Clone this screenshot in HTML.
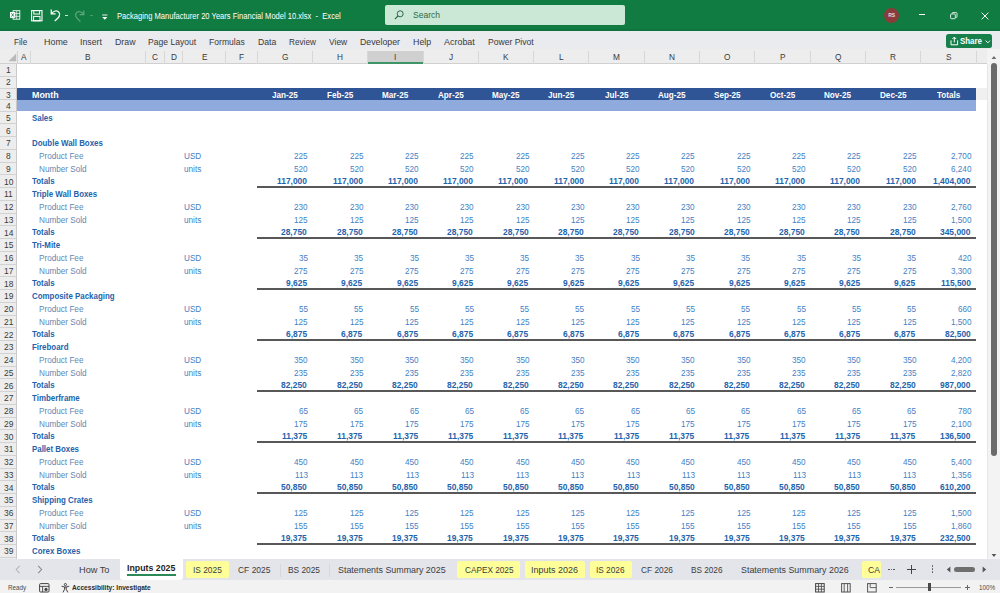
<!DOCTYPE html>
<html><head><meta charset="utf-8"><title>Packaging Manufacturer 20 Years Financial Model 10.xlsx - Excel</title>
<style>
html,body{margin:0;padding:0;}
body{width:1000px;height:593px;position:relative;overflow:hidden;background:#fff;font-family:"Liberation Sans",sans-serif;}
.t{position:absolute;white-space:pre;transform-origin:0 50%;display:block;}
.r{position:absolute;}
svg{position:absolute;overflow:visible;}
</style></head><body>
<div class="r" style="left:0.00px;top:0.00px;width:1000.00px;height:30.80px;background:#117c42;"></div>
<div class="r" style="left:0.00px;top:28.60px;width:1000.00px;height:2.20px;background:#0f7340;"></div>
<div class="r" style="left:385.20px;top:5.20px;width:240.30px;height:20.10px;background:#cbe8d7;border-radius:2px;"></div>
<span class="t " style="left:412.50px;top:8.90px;font-size:8.6px;line-height:12.6px;color:#2b6a47;transform:scaleX(0.9909);">Search</span>
<svg style="left:393px;top:9px" width="12" height="12" viewBox="0 0 12 12"><circle cx="7.2" cy="4.8" r="3" fill="none" stroke="#2b6a47" stroke-width="1"/><path d="M5 7 L1.8 10.2" stroke="#2b6a47" stroke-width="1.1" fill="none"/></svg>
<span class="t " style="left:117.00px;top:9.95px;font-size:8.5px;line-height:12.5px;color:#ffffff;transform:scaleX(0.8904);">Packaging Manufacturer 20 Years Financial Model 10.xlsx  -  Excel</span>
<svg style="left:10.4px;top:10.2px" width="10.6" height="10.6" viewBox="0 0 12 12"><rect x="3.5" y="0.8" width="7.6" height="9.6" fill="none" stroke="#fff" stroke-width="1"/><path d="M3.5 4h7.6M3.5 7.2h7.6M7.6 0.8v9.6" stroke="#fff" stroke-width="0.8"/><rect x="0" y="2.3" width="6" height="6.6" fill="#fff"/><path d="M1.6 3.8l2.8 3.6M4.4 3.8L1.6 7.4" stroke="#117c42" stroke-width="1"/></svg>
<svg style="left:31px;top:10px" width="12" height="12" viewBox="0 0 12 12"><rect x="0.6" y="0.6" width="10.4" height="10.2" fill="none" stroke="#fff" stroke-width="1.1"/><rect x="2.8" y="0.6" width="5.8" height="3.4" fill="none" stroke="#fff" stroke-width="1"/><rect x="2.6" y="6.4" width="6.4" height="4.4" fill="none" stroke="#fff" stroke-width="1"/></svg>
<svg style="left:49.6px;top:8.2px" width="12.4" height="14.8" viewBox="0 0 12 14"><path d="M1.2 1.4v4.2h4.2" fill="none" stroke="#fff" stroke-width="1.2"/><path d="M1.6 5.2C3.4 2.4 7 1.8 8.8 4.2c1.6 2.4 0 5-4.2 8.2" fill="none" stroke="#fff" stroke-width="1.2"/></svg>
<div class="r" style="left:64.50px;top:15.20px;width:3.00px;height:1.00px;background:#cfe3d6;"></div>
<svg style="left:73px;top:9px;opacity:.33" width="12" height="14" viewBox="0 0 12 14"><path d="M10.8 1.4v4.2h-4.2" fill="none" stroke="#fff" stroke-width="1.2"/><path d="M10.4 5.2C8.6 2.4 5 1.8 3.2 4.2c-1.6 2.4 0 5 4.2 8.2" fill="none" stroke="#fff" stroke-width="1.2"/></svg>
<div class="r" style="left:90.00px;top:15.20px;width:3.00px;height:1.00px;background:#4b9a6c;"></div>
<svg style="left:101px;top:13.5px" width="8" height="7" viewBox="0 0 8 7"><path d="M1.2 1h5.2" stroke="#fff" stroke-width="0.9"/><path d="M1.2 3h5.2L3.8 5.8z" fill="#fff"/></svg>
<div class="r" style="left:884.00px;top:7.80px;width:15.40px;height:15.40px;background:#8a3b3a;border-radius:50%;"></div>
<span class="t " style="left:888.23px;top:11.10px;font-size:5px;line-height:9px;color:#f3d9d9;transform:scaleX(1.0000);font-weight:bold;">RS</span>
<div class="r" style="left:919.00px;top:14.40px;width:5.60px;height:1.00px;background:#fff;"></div>
<svg style="left:949.8px;top:11.6px" width="7.6" height="7.6" viewBox="0 0 10 10"><rect x="0.8" y="2.6" width="6.2" height="6.2" rx="1" fill="none" stroke="#fff" stroke-width="1.1"/><path d="M2.8 2.4V1.6c0-.5.3-.8.8-.8h4.6c.6 0 1 .4 1 1v4.6c0 .5-.3.8-.8.8H7.4" fill="none" stroke="#fff" stroke-width="1.1"/></svg>
<svg style="left:980.6px;top:11.6px" width="8" height="8" viewBox="0 0 10 10"><path d="M0.8 0.8l8.4 8.4M9.2 0.8L0.8 9.2" stroke="#fff" stroke-width="1.2"/></svg>
<div class="r" style="left:0.00px;top:30.80px;width:1000.00px;height:17.90px;background:#e9ebef;"></div>
<span class="t " style="left:14.00px;top:35.80px;font-size:9px;line-height:13px;color:#3a3a3a;transform:scaleX(0.9103);">File</span>
<span class="t " style="left:44.00px;top:35.80px;font-size:9px;line-height:13px;color:#3a3a3a;transform:scaleX(0.9914);">Home</span>
<span class="t " style="left:80.40px;top:35.80px;font-size:9px;line-height:13px;color:#3a3a3a;transform:scaleX(0.9686);">Insert</span>
<span class="t " style="left:114.80px;top:35.80px;font-size:9px;line-height:13px;color:#3a3a3a;transform:scaleX(0.9761);">Draw</span>
<span class="t " style="left:147.90px;top:35.80px;font-size:9px;line-height:13px;color:#3a3a3a;transform:scaleX(0.9518);">Page Layout</span>
<span class="t " style="left:209.20px;top:35.80px;font-size:9px;line-height:13px;color:#3a3a3a;transform:scaleX(0.9545);">Formulas</span>
<span class="t " style="left:257.60px;top:35.80px;font-size:9px;line-height:13px;color:#3a3a3a;transform:scaleX(0.9627);">Data</span>
<span class="t " style="left:288.80px;top:35.80px;font-size:9px;line-height:13px;color:#3a3a3a;transform:scaleX(0.9116);">Review</span>
<span class="t " style="left:329.40px;top:35.80px;font-size:9px;line-height:13px;color:#3a3a3a;transform:scaleX(0.9408);">View</span>
<span class="t " style="left:360.20px;top:35.80px;font-size:9px;line-height:13px;color:#3a3a3a;transform:scaleX(0.9751);">Developer</span>
<span class="t " style="left:412.80px;top:35.80px;font-size:9px;line-height:13px;color:#3a3a3a;transform:scaleX(0.9833);">Help</span>
<span class="t " style="left:443.70px;top:35.80px;font-size:9px;line-height:13px;color:#3a3a3a;transform:scaleX(0.9931);">Acrobat</span>
<span class="t " style="left:487.60px;top:35.80px;font-size:9px;line-height:13px;color:#3a3a3a;transform:scaleX(0.9517);">Power Pivot</span>
<div class="r" style="left:946.30px;top:33.50px;width:46.20px;height:14.90px;background:#17804a;border-radius:2.5px;"></div>
<span class="t " style="left:960.00px;top:35.00px;font-size:8.6px;line-height:12.6px;color:#fff;transform:scaleX(0.9205);font-weight:bold;">Share</span>
<svg style="left:950px;top:36px" width="9" height="10" viewBox="0 0 9 10"><path d="M1 4.4v4.4h6.6V4.4" fill="none" stroke="#fff" stroke-width="1"/><path d="M4.3 6.4V1.2M2.4 3l1.9-1.9L6.2 3" fill="none" stroke="#fff" stroke-width="1"/></svg>
<svg style="left:984.5px;top:39.5px" width="6" height="4" viewBox="0 0 6 4"><path d="M0.6 0.6l2.2 2.2L5 0.6" fill="none" stroke="#fff" stroke-width="1"/></svg>
<div class="r" style="left:0.00px;top:48.70px;width:1000.00px;height:15.10px;background:#ededed;"></div>
<div class="r" style="left:0.00px;top:63.20px;width:987.00px;height:0.60px;background:#d0d0d0;"></div>
<div class="r" style="left:367.60px;top:50.60px;width:55.30px;height:13.20px;background:#d0d0d0;"></div>
<div class="r" style="left:367.60px;top:62.40px;width:55.30px;height:1.20px;background:#3f9468;"></div>
<svg style="left:8px;top:53px" width="9" height="9" viewBox="0 0 9 9"><path d="M8.2 0.6V8.2H0.6z" fill="#b9b9b9"/></svg>
<span class="t " style="left:21.29px;top:50.90px;font-size:9px;line-height:13px;color:#3a3a3a;transform:scaleX(0.9200);">A</span>
<div class="r" style="left:29.60px;top:51.00px;width:0.80px;height:12.50px;background:#d8d8d8;"></div>
<span class="t " style="left:85.04px;top:50.90px;font-size:9px;line-height:13px;color:#3a3a3a;transform:scaleX(0.9200);">B</span>
<div class="r" style="left:144.60px;top:51.00px;width:0.80px;height:12.50px;background:#d8d8d8;"></div>
<span class="t " style="left:151.81px;top:50.90px;font-size:9px;line-height:13px;color:#3a3a3a;transform:scaleX(0.9200);">C</span>
<div class="r" style="left:163.60px;top:51.00px;width:0.80px;height:12.50px;background:#d8d8d8;"></div>
<span class="t " style="left:170.51px;top:50.90px;font-size:9px;line-height:13px;color:#3a3a3a;transform:scaleX(0.9200);">D</span>
<div class="r" style="left:182.00px;top:51.00px;width:0.80px;height:12.50px;background:#d8d8d8;"></div>
<span class="t " style="left:201.54px;top:50.90px;font-size:9px;line-height:13px;color:#3a3a3a;transform:scaleX(0.9200);">E</span>
<div class="r" style="left:225.20px;top:51.00px;width:0.80px;height:12.50px;background:#d8d8d8;"></div>
<span class="t " style="left:239.07px;top:50.90px;font-size:9px;line-height:13px;color:#3a3a3a;transform:scaleX(0.9200);">F</span>
<div class="r" style="left:256.60px;top:51.00px;width:0.80px;height:12.50px;background:#d8d8d8;"></div>
<span class="t " style="left:281.73px;top:50.90px;font-size:9px;line-height:13px;color:#3a3a3a;transform:scaleX(0.9200);">G</span>
<div class="r" style="left:311.90px;top:51.00px;width:0.80px;height:12.50px;background:#d8d8d8;"></div>
<span class="t " style="left:337.26px;top:50.90px;font-size:9px;line-height:13px;color:#3a3a3a;transform:scaleX(0.9200);">H</span>
<div class="r" style="left:367.20px;top:51.00px;width:0.80px;height:12.50px;background:#d8d8d8;"></div>
<span class="t " style="left:394.40px;top:50.90px;font-size:9px;line-height:13px;color:#3a3a3a;transform:scaleX(0.9200);">I</span>
<div class="r" style="left:422.50px;top:51.00px;width:0.80px;height:12.50px;background:#d8d8d8;"></div>
<span class="t " style="left:448.78px;top:50.90px;font-size:9px;line-height:13px;color:#3a3a3a;transform:scaleX(0.9200);">J</span>
<div class="r" style="left:477.80px;top:51.00px;width:0.80px;height:12.50px;background:#d8d8d8;"></div>
<span class="t " style="left:503.39px;top:50.90px;font-size:9px;line-height:13px;color:#3a3a3a;transform:scaleX(0.9200);">K</span>
<div class="r" style="left:533.10px;top:51.00px;width:0.80px;height:12.50px;background:#d8d8d8;"></div>
<span class="t " style="left:559.15px;top:50.90px;font-size:9px;line-height:13px;color:#3a3a3a;transform:scaleX(0.9200);">L</span>
<div class="r" style="left:588.40px;top:51.00px;width:0.80px;height:12.50px;background:#d8d8d8;"></div>
<span class="t " style="left:613.30px;top:50.90px;font-size:9px;line-height:13px;color:#3a3a3a;transform:scaleX(0.9200);">M</span>
<div class="r" style="left:643.70px;top:51.00px;width:0.80px;height:12.50px;background:#d8d8d8;"></div>
<span class="t " style="left:669.06px;top:50.90px;font-size:9px;line-height:13px;color:#3a3a3a;transform:scaleX(0.9200);">N</span>
<div class="r" style="left:699.00px;top:51.00px;width:0.80px;height:12.50px;background:#d8d8d8;"></div>
<span class="t " style="left:724.13px;top:50.90px;font-size:9px;line-height:13px;color:#3a3a3a;transform:scaleX(0.9200);">O</span>
<div class="r" style="left:754.30px;top:51.00px;width:0.80px;height:12.50px;background:#d8d8d8;"></div>
<span class="t " style="left:779.89px;top:50.90px;font-size:9px;line-height:13px;color:#3a3a3a;transform:scaleX(0.9200);">P</span>
<div class="r" style="left:809.60px;top:51.00px;width:0.80px;height:12.50px;background:#d8d8d8;"></div>
<span class="t " style="left:834.73px;top:50.90px;font-size:9px;line-height:13px;color:#3a3a3a;transform:scaleX(0.9200);">Q</span>
<div class="r" style="left:864.90px;top:51.00px;width:0.80px;height:12.50px;background:#d8d8d8;"></div>
<span class="t " style="left:890.26px;top:50.90px;font-size:9px;line-height:13px;color:#3a3a3a;transform:scaleX(0.9200);">R</span>
<div class="r" style="left:920.20px;top:51.00px;width:0.80px;height:12.50px;background:#d8d8d8;"></div>
<span class="t " style="left:945.79px;top:50.90px;font-size:9px;line-height:13px;color:#3a3a3a;transform:scaleX(0.9200);">S</span>
<div class="r" style="left:975.50px;top:51.00px;width:0.80px;height:12.50px;background:#d8d8d8;"></div>
<div class="r" style="left:17.00px;top:51.00px;width:0.80px;height:12.50px;background:#d4d4d4;"></div>
<div class="r" style="left:0.00px;top:63.90px;width:16.40px;height:495.30px;background:#ededed;"></div>
<div class="r" style="left:16.40px;top:63.90px;width:0.90px;height:495.30px;background:#c9c9c9;"></div>
<div class="r" style="left:0.00px;top:75.60px;width:16.60px;height:0.80px;background:#d2d2d2;"></div>
<span class="t " style="left:6.35px;top:63.00px;font-size:9.4px;line-height:13.4px;color:#3a3a3a;transform:scaleX(0.9000);">1</span>
<div class="r" style="left:0.00px;top:87.60px;width:16.60px;height:0.80px;background:#d2d2d2;"></div>
<span class="t " style="left:6.35px;top:75.40px;font-size:9.4px;line-height:13.4px;color:#3a3a3a;transform:scaleX(0.9000);">2</span>
<div class="r" style="left:0.00px;top:99.40px;width:16.60px;height:0.80px;background:#d2d2d2;"></div>
<span class="t " style="left:6.35px;top:88.10px;font-size:9.4px;line-height:13.4px;color:#3a3a3a;transform:scaleX(0.9000);">3</span>
<div class="r" style="left:0.00px;top:110.60px;width:16.60px;height:0.80px;background:#d2d2d2;"></div>
<span class="t " style="left:6.35px;top:98.70px;font-size:9.4px;line-height:13.4px;color:#3a3a3a;transform:scaleX(0.9000);">4</span>
<div class="r" style="left:0.00px;top:123.35px;width:16.60px;height:0.80px;background:#d2d2d2;"></div>
<span class="t " style="left:6.35px;top:110.88px;font-size:9.4px;line-height:13.4px;color:#3a3a3a;transform:scaleX(0.9000);">5</span>
<div class="r" style="left:0.00px;top:136.10px;width:16.60px;height:0.80px;background:#d2d2d2;"></div>
<span class="t " style="left:6.35px;top:123.62px;font-size:9.4px;line-height:13.4px;color:#3a3a3a;transform:scaleX(0.9000);">6</span>
<div class="r" style="left:0.00px;top:148.85px;width:16.60px;height:0.80px;background:#d2d2d2;"></div>
<span class="t " style="left:6.35px;top:136.38px;font-size:9.4px;line-height:13.4px;color:#3a3a3a;transform:scaleX(0.9000);">7</span>
<div class="r" style="left:0.00px;top:161.60px;width:16.60px;height:0.80px;background:#d2d2d2;"></div>
<span class="t " style="left:6.35px;top:149.12px;font-size:9.4px;line-height:13.4px;color:#3a3a3a;transform:scaleX(0.9000);">8</span>
<div class="r" style="left:0.00px;top:174.35px;width:16.60px;height:0.80px;background:#d2d2d2;"></div>
<span class="t " style="left:6.35px;top:161.88px;font-size:9.4px;line-height:13.4px;color:#3a3a3a;transform:scaleX(0.9000);">9</span>
<div class="r" style="left:0.00px;top:187.10px;width:16.60px;height:0.80px;background:#d2d2d2;"></div>
<span class="t " style="left:4.00px;top:174.62px;font-size:9.4px;line-height:13.4px;color:#3a3a3a;transform:scaleX(0.9000);">10</span>
<div class="r" style="left:0.00px;top:199.85px;width:16.60px;height:0.80px;background:#d2d2d2;"></div>
<span class="t " style="left:4.31px;top:187.38px;font-size:9.4px;line-height:13.4px;color:#3a3a3a;transform:scaleX(0.9000);">11</span>
<div class="r" style="left:0.00px;top:212.60px;width:16.60px;height:0.80px;background:#d2d2d2;"></div>
<span class="t " style="left:4.00px;top:200.12px;font-size:9.4px;line-height:13.4px;color:#3a3a3a;transform:scaleX(0.9000);">12</span>
<div class="r" style="left:0.00px;top:225.35px;width:16.60px;height:0.80px;background:#d2d2d2;"></div>
<span class="t " style="left:4.00px;top:212.88px;font-size:9.4px;line-height:13.4px;color:#3a3a3a;transform:scaleX(0.9000);">13</span>
<div class="r" style="left:0.00px;top:238.10px;width:16.60px;height:0.80px;background:#d2d2d2;"></div>
<span class="t " style="left:4.00px;top:225.62px;font-size:9.4px;line-height:13.4px;color:#3a3a3a;transform:scaleX(0.9000);">14</span>
<div class="r" style="left:0.00px;top:250.85px;width:16.60px;height:0.80px;background:#d2d2d2;"></div>
<span class="t " style="left:4.00px;top:238.38px;font-size:9.4px;line-height:13.4px;color:#3a3a3a;transform:scaleX(0.9000);">15</span>
<div class="r" style="left:0.00px;top:263.60px;width:16.60px;height:0.80px;background:#d2d2d2;"></div>
<span class="t " style="left:4.00px;top:251.12px;font-size:9.4px;line-height:13.4px;color:#3a3a3a;transform:scaleX(0.9000);">16</span>
<div class="r" style="left:0.00px;top:276.35px;width:16.60px;height:0.80px;background:#d2d2d2;"></div>
<span class="t " style="left:4.00px;top:263.88px;font-size:9.4px;line-height:13.4px;color:#3a3a3a;transform:scaleX(0.9000);">17</span>
<div class="r" style="left:0.00px;top:289.10px;width:16.60px;height:0.80px;background:#d2d2d2;"></div>
<span class="t " style="left:4.00px;top:276.62px;font-size:9.4px;line-height:13.4px;color:#3a3a3a;transform:scaleX(0.9000);">18</span>
<div class="r" style="left:0.00px;top:301.85px;width:16.60px;height:0.80px;background:#d2d2d2;"></div>
<span class="t " style="left:4.00px;top:289.38px;font-size:9.4px;line-height:13.4px;color:#3a3a3a;transform:scaleX(0.9000);">19</span>
<div class="r" style="left:0.00px;top:314.60px;width:16.60px;height:0.80px;background:#d2d2d2;"></div>
<span class="t " style="left:4.00px;top:302.12px;font-size:9.4px;line-height:13.4px;color:#3a3a3a;transform:scaleX(0.9000);">20</span>
<div class="r" style="left:0.00px;top:327.35px;width:16.60px;height:0.80px;background:#d2d2d2;"></div>
<span class="t " style="left:4.00px;top:314.88px;font-size:9.4px;line-height:13.4px;color:#3a3a3a;transform:scaleX(0.9000);">21</span>
<div class="r" style="left:0.00px;top:340.10px;width:16.60px;height:0.80px;background:#d2d2d2;"></div>
<span class="t " style="left:4.00px;top:327.62px;font-size:9.4px;line-height:13.4px;color:#3a3a3a;transform:scaleX(0.9000);">22</span>
<div class="r" style="left:0.00px;top:352.85px;width:16.60px;height:0.80px;background:#d2d2d2;"></div>
<span class="t " style="left:4.00px;top:340.38px;font-size:9.4px;line-height:13.4px;color:#3a3a3a;transform:scaleX(0.9000);">23</span>
<div class="r" style="left:0.00px;top:365.60px;width:16.60px;height:0.80px;background:#d2d2d2;"></div>
<span class="t " style="left:4.00px;top:353.12px;font-size:9.4px;line-height:13.4px;color:#3a3a3a;transform:scaleX(0.9000);">24</span>
<div class="r" style="left:0.00px;top:378.35px;width:16.60px;height:0.80px;background:#d2d2d2;"></div>
<span class="t " style="left:4.00px;top:365.88px;font-size:9.4px;line-height:13.4px;color:#3a3a3a;transform:scaleX(0.9000);">25</span>
<div class="r" style="left:0.00px;top:391.10px;width:16.60px;height:0.80px;background:#d2d2d2;"></div>
<span class="t " style="left:4.00px;top:378.62px;font-size:9.4px;line-height:13.4px;color:#3a3a3a;transform:scaleX(0.9000);">26</span>
<div class="r" style="left:0.00px;top:403.85px;width:16.60px;height:0.80px;background:#d2d2d2;"></div>
<span class="t " style="left:4.00px;top:391.38px;font-size:9.4px;line-height:13.4px;color:#3a3a3a;transform:scaleX(0.9000);">27</span>
<div class="r" style="left:0.00px;top:416.60px;width:16.60px;height:0.80px;background:#d2d2d2;"></div>
<span class="t " style="left:4.00px;top:404.12px;font-size:9.4px;line-height:13.4px;color:#3a3a3a;transform:scaleX(0.9000);">28</span>
<div class="r" style="left:0.00px;top:429.35px;width:16.60px;height:0.80px;background:#d2d2d2;"></div>
<span class="t " style="left:4.00px;top:416.88px;font-size:9.4px;line-height:13.4px;color:#3a3a3a;transform:scaleX(0.9000);">29</span>
<div class="r" style="left:0.00px;top:442.10px;width:16.60px;height:0.80px;background:#d2d2d2;"></div>
<span class="t " style="left:4.00px;top:429.62px;font-size:9.4px;line-height:13.4px;color:#3a3a3a;transform:scaleX(0.9000);">30</span>
<div class="r" style="left:0.00px;top:454.85px;width:16.60px;height:0.80px;background:#d2d2d2;"></div>
<span class="t " style="left:4.00px;top:442.38px;font-size:9.4px;line-height:13.4px;color:#3a3a3a;transform:scaleX(0.9000);">31</span>
<div class="r" style="left:0.00px;top:467.60px;width:16.60px;height:0.80px;background:#d2d2d2;"></div>
<span class="t " style="left:4.00px;top:455.12px;font-size:9.4px;line-height:13.4px;color:#3a3a3a;transform:scaleX(0.9000);">32</span>
<div class="r" style="left:0.00px;top:480.35px;width:16.60px;height:0.80px;background:#d2d2d2;"></div>
<span class="t " style="left:4.00px;top:467.88px;font-size:9.4px;line-height:13.4px;color:#3a3a3a;transform:scaleX(0.9000);">33</span>
<div class="r" style="left:0.00px;top:493.10px;width:16.60px;height:0.80px;background:#d2d2d2;"></div>
<span class="t " style="left:4.00px;top:480.62px;font-size:9.4px;line-height:13.4px;color:#3a3a3a;transform:scaleX(0.9000);">34</span>
<div class="r" style="left:0.00px;top:505.85px;width:16.60px;height:0.80px;background:#d2d2d2;"></div>
<span class="t " style="left:4.00px;top:493.38px;font-size:9.4px;line-height:13.4px;color:#3a3a3a;transform:scaleX(0.9000);">35</span>
<div class="r" style="left:0.00px;top:518.60px;width:16.60px;height:0.80px;background:#d2d2d2;"></div>
<span class="t " style="left:4.00px;top:506.13px;font-size:9.4px;line-height:13.4px;color:#3a3a3a;transform:scaleX(0.9000);">36</span>
<div class="r" style="left:0.00px;top:531.35px;width:16.60px;height:0.80px;background:#d2d2d2;"></div>
<span class="t " style="left:4.00px;top:518.88px;font-size:9.4px;line-height:13.4px;color:#3a3a3a;transform:scaleX(0.9000);">37</span>
<div class="r" style="left:0.00px;top:544.10px;width:16.60px;height:0.80px;background:#d2d2d2;"></div>
<span class="t " style="left:4.00px;top:531.62px;font-size:9.4px;line-height:13.4px;color:#3a3a3a;transform:scaleX(0.9000);">38</span>
<div class="r" style="left:0.00px;top:556.85px;width:16.60px;height:0.80px;background:#d2d2d2;"></div>
<span class="t " style="left:4.00px;top:544.38px;font-size:9.4px;line-height:13.4px;color:#3a3a3a;transform:scaleX(0.9000);">39</span>
<div class="r" style="left:17.30px;top:87.80px;width:958.60px;height:12.00px;background:#2f5597;"></div>
<div class="r" style="left:17.30px;top:99.80px;width:958.60px;height:11.60px;background:#8faadc;"></div>
<div class="r" style="left:975.90px;top:88.00px;width:11.10px;height:11.80px;background:#f0f0f0;"></div>
<span class="t " style="left:32.00px;top:88.75px;font-size:8.5px;line-height:12.5px;color:#ffffff;transform:scaleX(1.0437);font-weight:bold;">Month</span>
<span class="t " style="left:271.99px;top:88.75px;font-size:8.5px;line-height:12.5px;color:#ffffff;transform:scaleX(0.9550);font-weight:bold;">Jan-25</span>
<span class="t " style="left:327.07px;top:88.75px;font-size:8.5px;line-height:12.5px;color:#ffffff;transform:scaleX(0.9550);font-weight:bold;">Feb-25</span>
<span class="t " style="left:382.37px;top:88.75px;font-size:8.5px;line-height:12.5px;color:#ffffff;transform:scaleX(0.9550);font-weight:bold;">Mar-25</span>
<span class="t " style="left:437.89px;top:88.75px;font-size:8.5px;line-height:12.5px;color:#ffffff;transform:scaleX(0.9550);font-weight:bold;">Apr-25</span>
<span class="t " style="left:492.29px;top:88.75px;font-size:8.5px;line-height:12.5px;color:#ffffff;transform:scaleX(0.9550);font-weight:bold;">May-25</span>
<span class="t " style="left:548.27px;top:88.75px;font-size:8.5px;line-height:12.5px;color:#ffffff;transform:scaleX(0.9550);font-weight:bold;">Jun-25</span>
<span class="t " style="left:604.92px;top:88.75px;font-size:8.5px;line-height:12.5px;color:#ffffff;transform:scaleX(0.9550);font-weight:bold;">Jul-25</span>
<span class="t " style="left:658.20px;top:88.75px;font-size:8.5px;line-height:12.5px;color:#ffffff;transform:scaleX(0.9550);font-weight:bold;">Aug-25</span>
<span class="t " style="left:713.94px;top:88.75px;font-size:8.5px;line-height:12.5px;color:#ffffff;transform:scaleX(0.9550);font-weight:bold;">Sep-25</span>
<span class="t " style="left:769.92px;top:88.75px;font-size:8.5px;line-height:12.5px;color:#ffffff;transform:scaleX(0.9550);font-weight:bold;">Oct-25</span>
<span class="t " style="left:824.32px;top:88.75px;font-size:8.5px;line-height:12.5px;color:#ffffff;transform:scaleX(0.9550);font-weight:bold;">Nov-25</span>
<span class="t " style="left:879.84px;top:88.75px;font-size:8.5px;line-height:12.5px;color:#ffffff;transform:scaleX(0.9550);font-weight:bold;">Dec-25</span>
<span class="t " style="left:936.80px;top:88.75px;font-size:8.5px;line-height:12.5px;color:#ffffff;transform:scaleX(0.9550);font-weight:bold;">Totals</span>
<span class="t " style="left:32.00px;top:111.72px;font-size:8.5px;line-height:12.5px;color:#1e63ac;transform:scaleX(0.9300);font-weight:bold;">Sales</span>
<span class="t " style="left:32.00px;top:137.22px;font-size:8.5px;line-height:12.5px;color:#1e63ac;transform:scaleX(0.9300);font-weight:bold;">Double Wall Boxes</span>
<span class="t " style="left:38.60px;top:149.97px;font-size:8.5px;line-height:12.5px;color:#6088b3;transform:scaleX(0.9600);">Product Fee</span>
<span class="t " style="left:183.80px;top:149.97px;font-size:8.5px;line-height:12.5px;color:#3f7fc0;transform:scaleX(0.9600);">USD</span>
<span class="t " style="left:38.60px;top:162.72px;font-size:8.5px;line-height:12.5px;color:#6088b3;transform:scaleX(0.9600);">Number Sold</span>
<span class="t " style="left:183.80px;top:162.72px;font-size:8.5px;line-height:12.5px;color:#3f7fc0;transform:scaleX(0.9600);">units</span>
<span class="t " style="left:32.00px;top:175.47px;font-size:8.5px;line-height:12.5px;color:#1e63ac;transform:scaleX(0.9300);font-weight:bold;">Totals</span>
<span class="t " style="left:294.39px;top:149.97px;font-size:8.5px;line-height:12.5px;color:#3f82c6;transform:scaleX(0.9600);">225</span>
<span class="t " style="left:294.39px;top:162.72px;font-size:8.5px;line-height:12.5px;color:#3f82c6;transform:scaleX(0.9600);">520</span>
<span class="t " style="left:277.25px;top:175.47px;font-size:8.5px;line-height:12.5px;color:#1e63ac;transform:scaleX(0.9900);font-weight:bold;">117,000</span>
<span class="t " style="left:349.69px;top:149.97px;font-size:8.5px;line-height:12.5px;color:#3f82c6;transform:scaleX(0.9600);">225</span>
<span class="t " style="left:349.69px;top:162.72px;font-size:8.5px;line-height:12.5px;color:#3f82c6;transform:scaleX(0.9600);">520</span>
<span class="t " style="left:332.55px;top:175.47px;font-size:8.5px;line-height:12.5px;color:#1e63ac;transform:scaleX(0.9900);font-weight:bold;">117,000</span>
<span class="t " style="left:404.99px;top:149.97px;font-size:8.5px;line-height:12.5px;color:#3f82c6;transform:scaleX(0.9600);">225</span>
<span class="t " style="left:404.99px;top:162.72px;font-size:8.5px;line-height:12.5px;color:#3f82c6;transform:scaleX(0.9600);">520</span>
<span class="t " style="left:387.85px;top:175.47px;font-size:8.5px;line-height:12.5px;color:#1e63ac;transform:scaleX(0.9900);font-weight:bold;">117,000</span>
<span class="t " style="left:460.29px;top:149.97px;font-size:8.5px;line-height:12.5px;color:#3f82c6;transform:scaleX(0.9600);">225</span>
<span class="t " style="left:460.29px;top:162.72px;font-size:8.5px;line-height:12.5px;color:#3f82c6;transform:scaleX(0.9600);">520</span>
<span class="t " style="left:443.15px;top:175.47px;font-size:8.5px;line-height:12.5px;color:#1e63ac;transform:scaleX(0.9900);font-weight:bold;">117,000</span>
<span class="t " style="left:515.59px;top:149.97px;font-size:8.5px;line-height:12.5px;color:#3f82c6;transform:scaleX(0.9600);">225</span>
<span class="t " style="left:515.59px;top:162.72px;font-size:8.5px;line-height:12.5px;color:#3f82c6;transform:scaleX(0.9600);">520</span>
<span class="t " style="left:498.45px;top:175.47px;font-size:8.5px;line-height:12.5px;color:#1e63ac;transform:scaleX(0.9900);font-weight:bold;">117,000</span>
<span class="t " style="left:570.89px;top:149.97px;font-size:8.5px;line-height:12.5px;color:#3f82c6;transform:scaleX(0.9600);">225</span>
<span class="t " style="left:570.89px;top:162.72px;font-size:8.5px;line-height:12.5px;color:#3f82c6;transform:scaleX(0.9600);">520</span>
<span class="t " style="left:553.75px;top:175.47px;font-size:8.5px;line-height:12.5px;color:#1e63ac;transform:scaleX(0.9900);font-weight:bold;">117,000</span>
<span class="t " style="left:626.19px;top:149.97px;font-size:8.5px;line-height:12.5px;color:#3f82c6;transform:scaleX(0.9600);">225</span>
<span class="t " style="left:626.19px;top:162.72px;font-size:8.5px;line-height:12.5px;color:#3f82c6;transform:scaleX(0.9600);">520</span>
<span class="t " style="left:609.05px;top:175.47px;font-size:8.5px;line-height:12.5px;color:#1e63ac;transform:scaleX(0.9900);font-weight:bold;">117,000</span>
<span class="t " style="left:681.49px;top:149.97px;font-size:8.5px;line-height:12.5px;color:#3f82c6;transform:scaleX(0.9600);">225</span>
<span class="t " style="left:681.49px;top:162.72px;font-size:8.5px;line-height:12.5px;color:#3f82c6;transform:scaleX(0.9600);">520</span>
<span class="t " style="left:664.35px;top:175.47px;font-size:8.5px;line-height:12.5px;color:#1e63ac;transform:scaleX(0.9900);font-weight:bold;">117,000</span>
<span class="t " style="left:736.79px;top:149.97px;font-size:8.5px;line-height:12.5px;color:#3f82c6;transform:scaleX(0.9600);">225</span>
<span class="t " style="left:736.79px;top:162.72px;font-size:8.5px;line-height:12.5px;color:#3f82c6;transform:scaleX(0.9600);">520</span>
<span class="t " style="left:719.65px;top:175.47px;font-size:8.5px;line-height:12.5px;color:#1e63ac;transform:scaleX(0.9900);font-weight:bold;">117,000</span>
<span class="t " style="left:792.09px;top:149.97px;font-size:8.5px;line-height:12.5px;color:#3f82c6;transform:scaleX(0.9600);">225</span>
<span class="t " style="left:792.09px;top:162.72px;font-size:8.5px;line-height:12.5px;color:#3f82c6;transform:scaleX(0.9600);">520</span>
<span class="t " style="left:774.95px;top:175.47px;font-size:8.5px;line-height:12.5px;color:#1e63ac;transform:scaleX(0.9900);font-weight:bold;">117,000</span>
<span class="t " style="left:847.39px;top:149.97px;font-size:8.5px;line-height:12.5px;color:#3f82c6;transform:scaleX(0.9600);">225</span>
<span class="t " style="left:847.39px;top:162.72px;font-size:8.5px;line-height:12.5px;color:#3f82c6;transform:scaleX(0.9600);">520</span>
<span class="t " style="left:830.25px;top:175.47px;font-size:8.5px;line-height:12.5px;color:#1e63ac;transform:scaleX(0.9900);font-weight:bold;">117,000</span>
<span class="t " style="left:902.69px;top:149.97px;font-size:8.5px;line-height:12.5px;color:#3f82c6;transform:scaleX(0.9600);">225</span>
<span class="t " style="left:902.69px;top:162.72px;font-size:8.5px;line-height:12.5px;color:#3f82c6;transform:scaleX(0.9600);">520</span>
<span class="t " style="left:885.55px;top:175.47px;font-size:8.5px;line-height:12.5px;color:#1e63ac;transform:scaleX(0.9900);font-weight:bold;">117,000</span>
<span class="t " style="left:951.18px;top:149.97px;font-size:8.5px;line-height:12.5px;color:#3f82c6;transform:scaleX(0.9600);">2,700</span>
<span class="t " style="left:951.18px;top:162.72px;font-size:8.5px;line-height:12.5px;color:#3f82c6;transform:scaleX(0.9600);">6,240</span>
<span class="t " style="left:933.37px;top:175.47px;font-size:8.5px;line-height:12.5px;color:#1e63ac;transform:scaleX(0.9900);font-weight:bold;">1,404,000</span>
<div class="r" style="left:257.00px;top:186.25px;width:718.90px;height:1.25px;background:#585858;"></div>
<span class="t " style="left:32.00px;top:188.22px;font-size:8.5px;line-height:12.5px;color:#1e63ac;transform:scaleX(0.9300);font-weight:bold;">Triple Wall Boxes</span>
<span class="t " style="left:38.60px;top:200.97px;font-size:8.5px;line-height:12.5px;color:#6088b3;transform:scaleX(0.9600);">Product Fee</span>
<span class="t " style="left:183.80px;top:200.97px;font-size:8.5px;line-height:12.5px;color:#3f7fc0;transform:scaleX(0.9600);">USD</span>
<span class="t " style="left:38.60px;top:213.72px;font-size:8.5px;line-height:12.5px;color:#6088b3;transform:scaleX(0.9600);">Number Sold</span>
<span class="t " style="left:183.80px;top:213.72px;font-size:8.5px;line-height:12.5px;color:#3f7fc0;transform:scaleX(0.9600);">units</span>
<span class="t " style="left:32.00px;top:226.47px;font-size:8.5px;line-height:12.5px;color:#1e63ac;transform:scaleX(0.9300);font-weight:bold;">Totals</span>
<span class="t " style="left:294.39px;top:200.97px;font-size:8.5px;line-height:12.5px;color:#3f82c6;transform:scaleX(0.9600);">230</span>
<span class="t " style="left:294.39px;top:213.72px;font-size:8.5px;line-height:12.5px;color:#3f82c6;transform:scaleX(0.9600);">125</span>
<span class="t " style="left:281.46px;top:226.47px;font-size:8.5px;line-height:12.5px;color:#1e63ac;transform:scaleX(0.9900);font-weight:bold;">28,750</span>
<span class="t " style="left:349.69px;top:200.97px;font-size:8.5px;line-height:12.5px;color:#3f82c6;transform:scaleX(0.9600);">230</span>
<span class="t " style="left:349.69px;top:213.72px;font-size:8.5px;line-height:12.5px;color:#3f82c6;transform:scaleX(0.9600);">125</span>
<span class="t " style="left:336.76px;top:226.47px;font-size:8.5px;line-height:12.5px;color:#1e63ac;transform:scaleX(0.9900);font-weight:bold;">28,750</span>
<span class="t " style="left:404.99px;top:200.97px;font-size:8.5px;line-height:12.5px;color:#3f82c6;transform:scaleX(0.9600);">230</span>
<span class="t " style="left:404.99px;top:213.72px;font-size:8.5px;line-height:12.5px;color:#3f82c6;transform:scaleX(0.9600);">125</span>
<span class="t " style="left:392.06px;top:226.47px;font-size:8.5px;line-height:12.5px;color:#1e63ac;transform:scaleX(0.9900);font-weight:bold;">28,750</span>
<span class="t " style="left:460.29px;top:200.97px;font-size:8.5px;line-height:12.5px;color:#3f82c6;transform:scaleX(0.9600);">230</span>
<span class="t " style="left:460.29px;top:213.72px;font-size:8.5px;line-height:12.5px;color:#3f82c6;transform:scaleX(0.9600);">125</span>
<span class="t " style="left:447.36px;top:226.47px;font-size:8.5px;line-height:12.5px;color:#1e63ac;transform:scaleX(0.9900);font-weight:bold;">28,750</span>
<span class="t " style="left:515.59px;top:200.97px;font-size:8.5px;line-height:12.5px;color:#3f82c6;transform:scaleX(0.9600);">230</span>
<span class="t " style="left:515.59px;top:213.72px;font-size:8.5px;line-height:12.5px;color:#3f82c6;transform:scaleX(0.9600);">125</span>
<span class="t " style="left:502.66px;top:226.47px;font-size:8.5px;line-height:12.5px;color:#1e63ac;transform:scaleX(0.9900);font-weight:bold;">28,750</span>
<span class="t " style="left:570.89px;top:200.97px;font-size:8.5px;line-height:12.5px;color:#3f82c6;transform:scaleX(0.9600);">230</span>
<span class="t " style="left:570.89px;top:213.72px;font-size:8.5px;line-height:12.5px;color:#3f82c6;transform:scaleX(0.9600);">125</span>
<span class="t " style="left:557.96px;top:226.47px;font-size:8.5px;line-height:12.5px;color:#1e63ac;transform:scaleX(0.9900);font-weight:bold;">28,750</span>
<span class="t " style="left:626.19px;top:200.97px;font-size:8.5px;line-height:12.5px;color:#3f82c6;transform:scaleX(0.9600);">230</span>
<span class="t " style="left:626.19px;top:213.72px;font-size:8.5px;line-height:12.5px;color:#3f82c6;transform:scaleX(0.9600);">125</span>
<span class="t " style="left:613.26px;top:226.47px;font-size:8.5px;line-height:12.5px;color:#1e63ac;transform:scaleX(0.9900);font-weight:bold;">28,750</span>
<span class="t " style="left:681.49px;top:200.97px;font-size:8.5px;line-height:12.5px;color:#3f82c6;transform:scaleX(0.9600);">230</span>
<span class="t " style="left:681.49px;top:213.72px;font-size:8.5px;line-height:12.5px;color:#3f82c6;transform:scaleX(0.9600);">125</span>
<span class="t " style="left:668.56px;top:226.47px;font-size:8.5px;line-height:12.5px;color:#1e63ac;transform:scaleX(0.9900);font-weight:bold;">28,750</span>
<span class="t " style="left:736.79px;top:200.97px;font-size:8.5px;line-height:12.5px;color:#3f82c6;transform:scaleX(0.9600);">230</span>
<span class="t " style="left:736.79px;top:213.72px;font-size:8.5px;line-height:12.5px;color:#3f82c6;transform:scaleX(0.9600);">125</span>
<span class="t " style="left:723.86px;top:226.47px;font-size:8.5px;line-height:12.5px;color:#1e63ac;transform:scaleX(0.9900);font-weight:bold;">28,750</span>
<span class="t " style="left:792.09px;top:200.97px;font-size:8.5px;line-height:12.5px;color:#3f82c6;transform:scaleX(0.9600);">230</span>
<span class="t " style="left:792.09px;top:213.72px;font-size:8.5px;line-height:12.5px;color:#3f82c6;transform:scaleX(0.9600);">125</span>
<span class="t " style="left:779.16px;top:226.47px;font-size:8.5px;line-height:12.5px;color:#1e63ac;transform:scaleX(0.9900);font-weight:bold;">28,750</span>
<span class="t " style="left:847.39px;top:200.97px;font-size:8.5px;line-height:12.5px;color:#3f82c6;transform:scaleX(0.9600);">230</span>
<span class="t " style="left:847.39px;top:213.72px;font-size:8.5px;line-height:12.5px;color:#3f82c6;transform:scaleX(0.9600);">125</span>
<span class="t " style="left:834.46px;top:226.47px;font-size:8.5px;line-height:12.5px;color:#1e63ac;transform:scaleX(0.9900);font-weight:bold;">28,750</span>
<span class="t " style="left:902.69px;top:200.97px;font-size:8.5px;line-height:12.5px;color:#3f82c6;transform:scaleX(0.9600);">230</span>
<span class="t " style="left:902.69px;top:213.72px;font-size:8.5px;line-height:12.5px;color:#3f82c6;transform:scaleX(0.9600);">125</span>
<span class="t " style="left:889.76px;top:226.47px;font-size:8.5px;line-height:12.5px;color:#1e63ac;transform:scaleX(0.9900);font-weight:bold;">28,750</span>
<span class="t " style="left:951.18px;top:200.97px;font-size:8.5px;line-height:12.5px;color:#3f82c6;transform:scaleX(0.9600);">2,760</span>
<span class="t " style="left:951.18px;top:213.72px;font-size:8.5px;line-height:12.5px;color:#3f82c6;transform:scaleX(0.9600);">1,500</span>
<span class="t " style="left:940.39px;top:226.47px;font-size:8.5px;line-height:12.5px;color:#1e63ac;transform:scaleX(0.9900);font-weight:bold;">345,000</span>
<div class="r" style="left:257.00px;top:237.25px;width:718.90px;height:1.25px;background:#585858;"></div>
<span class="t " style="left:32.00px;top:239.22px;font-size:8.5px;line-height:12.5px;color:#1e63ac;transform:scaleX(0.9300);font-weight:bold;">Tri-Mite</span>
<span class="t " style="left:38.60px;top:251.98px;font-size:8.5px;line-height:12.5px;color:#6088b3;transform:scaleX(0.9600);">Product Fee</span>
<span class="t " style="left:183.80px;top:251.98px;font-size:8.5px;line-height:12.5px;color:#3f7fc0;transform:scaleX(0.9600);">USD</span>
<span class="t " style="left:38.60px;top:264.73px;font-size:8.5px;line-height:12.5px;color:#6088b3;transform:scaleX(0.9600);">Number Sold</span>
<span class="t " style="left:183.80px;top:264.73px;font-size:8.5px;line-height:12.5px;color:#3f7fc0;transform:scaleX(0.9600);">units</span>
<span class="t " style="left:32.00px;top:277.48px;font-size:8.5px;line-height:12.5px;color:#1e63ac;transform:scaleX(0.9300);font-weight:bold;">Totals</span>
<span class="t " style="left:298.92px;top:251.98px;font-size:8.5px;line-height:12.5px;color:#3f82c6;transform:scaleX(0.9600);">35</span>
<span class="t " style="left:294.39px;top:264.73px;font-size:8.5px;line-height:12.5px;color:#3f82c6;transform:scaleX(0.9600);">275</span>
<span class="t " style="left:286.14px;top:277.48px;font-size:8.5px;line-height:12.5px;color:#1e63ac;transform:scaleX(0.9900);font-weight:bold;">9,625</span>
<span class="t " style="left:354.22px;top:251.98px;font-size:8.5px;line-height:12.5px;color:#3f82c6;transform:scaleX(0.9600);">35</span>
<span class="t " style="left:349.69px;top:264.73px;font-size:8.5px;line-height:12.5px;color:#3f82c6;transform:scaleX(0.9600);">275</span>
<span class="t " style="left:341.44px;top:277.48px;font-size:8.5px;line-height:12.5px;color:#1e63ac;transform:scaleX(0.9900);font-weight:bold;">9,625</span>
<span class="t " style="left:409.52px;top:251.98px;font-size:8.5px;line-height:12.5px;color:#3f82c6;transform:scaleX(0.9600);">35</span>
<span class="t " style="left:404.99px;top:264.73px;font-size:8.5px;line-height:12.5px;color:#3f82c6;transform:scaleX(0.9600);">275</span>
<span class="t " style="left:396.74px;top:277.48px;font-size:8.5px;line-height:12.5px;color:#1e63ac;transform:scaleX(0.9900);font-weight:bold;">9,625</span>
<span class="t " style="left:464.82px;top:251.98px;font-size:8.5px;line-height:12.5px;color:#3f82c6;transform:scaleX(0.9600);">35</span>
<span class="t " style="left:460.29px;top:264.73px;font-size:8.5px;line-height:12.5px;color:#3f82c6;transform:scaleX(0.9600);">275</span>
<span class="t " style="left:452.04px;top:277.48px;font-size:8.5px;line-height:12.5px;color:#1e63ac;transform:scaleX(0.9900);font-weight:bold;">9,625</span>
<span class="t " style="left:520.12px;top:251.98px;font-size:8.5px;line-height:12.5px;color:#3f82c6;transform:scaleX(0.9600);">35</span>
<span class="t " style="left:515.59px;top:264.73px;font-size:8.5px;line-height:12.5px;color:#3f82c6;transform:scaleX(0.9600);">275</span>
<span class="t " style="left:507.34px;top:277.48px;font-size:8.5px;line-height:12.5px;color:#1e63ac;transform:scaleX(0.9900);font-weight:bold;">9,625</span>
<span class="t " style="left:575.42px;top:251.98px;font-size:8.5px;line-height:12.5px;color:#3f82c6;transform:scaleX(0.9600);">35</span>
<span class="t " style="left:570.89px;top:264.73px;font-size:8.5px;line-height:12.5px;color:#3f82c6;transform:scaleX(0.9600);">275</span>
<span class="t " style="left:562.64px;top:277.48px;font-size:8.5px;line-height:12.5px;color:#1e63ac;transform:scaleX(0.9900);font-weight:bold;">9,625</span>
<span class="t " style="left:630.72px;top:251.98px;font-size:8.5px;line-height:12.5px;color:#3f82c6;transform:scaleX(0.9600);">35</span>
<span class="t " style="left:626.19px;top:264.73px;font-size:8.5px;line-height:12.5px;color:#3f82c6;transform:scaleX(0.9600);">275</span>
<span class="t " style="left:617.94px;top:277.48px;font-size:8.5px;line-height:12.5px;color:#1e63ac;transform:scaleX(0.9900);font-weight:bold;">9,625</span>
<span class="t " style="left:686.02px;top:251.98px;font-size:8.5px;line-height:12.5px;color:#3f82c6;transform:scaleX(0.9600);">35</span>
<span class="t " style="left:681.49px;top:264.73px;font-size:8.5px;line-height:12.5px;color:#3f82c6;transform:scaleX(0.9600);">275</span>
<span class="t " style="left:673.24px;top:277.48px;font-size:8.5px;line-height:12.5px;color:#1e63ac;transform:scaleX(0.9900);font-weight:bold;">9,625</span>
<span class="t " style="left:741.32px;top:251.98px;font-size:8.5px;line-height:12.5px;color:#3f82c6;transform:scaleX(0.9600);">35</span>
<span class="t " style="left:736.79px;top:264.73px;font-size:8.5px;line-height:12.5px;color:#3f82c6;transform:scaleX(0.9600);">275</span>
<span class="t " style="left:728.54px;top:277.48px;font-size:8.5px;line-height:12.5px;color:#1e63ac;transform:scaleX(0.9900);font-weight:bold;">9,625</span>
<span class="t " style="left:796.62px;top:251.98px;font-size:8.5px;line-height:12.5px;color:#3f82c6;transform:scaleX(0.9600);">35</span>
<span class="t " style="left:792.09px;top:264.73px;font-size:8.5px;line-height:12.5px;color:#3f82c6;transform:scaleX(0.9600);">275</span>
<span class="t " style="left:783.84px;top:277.48px;font-size:8.5px;line-height:12.5px;color:#1e63ac;transform:scaleX(0.9900);font-weight:bold;">9,625</span>
<span class="t " style="left:851.92px;top:251.98px;font-size:8.5px;line-height:12.5px;color:#3f82c6;transform:scaleX(0.9600);">35</span>
<span class="t " style="left:847.39px;top:264.73px;font-size:8.5px;line-height:12.5px;color:#3f82c6;transform:scaleX(0.9600);">275</span>
<span class="t " style="left:839.14px;top:277.48px;font-size:8.5px;line-height:12.5px;color:#1e63ac;transform:scaleX(0.9900);font-weight:bold;">9,625</span>
<span class="t " style="left:907.22px;top:251.98px;font-size:8.5px;line-height:12.5px;color:#3f82c6;transform:scaleX(0.9600);">35</span>
<span class="t " style="left:902.69px;top:264.73px;font-size:8.5px;line-height:12.5px;color:#3f82c6;transform:scaleX(0.9600);">275</span>
<span class="t " style="left:894.44px;top:277.48px;font-size:8.5px;line-height:12.5px;color:#1e63ac;transform:scaleX(0.9900);font-weight:bold;">9,625</span>
<span class="t " style="left:957.99px;top:251.98px;font-size:8.5px;line-height:12.5px;color:#3f82c6;transform:scaleX(0.9600);">420</span>
<span class="t " style="left:951.18px;top:264.73px;font-size:8.5px;line-height:12.5px;color:#3f82c6;transform:scaleX(0.9600);">3,300</span>
<span class="t " style="left:940.85px;top:277.48px;font-size:8.5px;line-height:12.5px;color:#1e63ac;transform:scaleX(0.9900);font-weight:bold;">115,500</span>
<div class="r" style="left:257.00px;top:288.25px;width:718.90px;height:1.25px;background:#585858;"></div>
<span class="t " style="left:32.00px;top:290.23px;font-size:8.5px;line-height:12.5px;color:#1e63ac;transform:scaleX(0.9300);font-weight:bold;">Composite Packaging</span>
<span class="t " style="left:38.60px;top:302.98px;font-size:8.5px;line-height:12.5px;color:#6088b3;transform:scaleX(0.9600);">Product Fee</span>
<span class="t " style="left:183.80px;top:302.98px;font-size:8.5px;line-height:12.5px;color:#3f7fc0;transform:scaleX(0.9600);">USD</span>
<span class="t " style="left:38.60px;top:315.73px;font-size:8.5px;line-height:12.5px;color:#6088b3;transform:scaleX(0.9600);">Number Sold</span>
<span class="t " style="left:183.80px;top:315.73px;font-size:8.5px;line-height:12.5px;color:#3f7fc0;transform:scaleX(0.9600);">units</span>
<span class="t " style="left:32.00px;top:328.48px;font-size:8.5px;line-height:12.5px;color:#1e63ac;transform:scaleX(0.9300);font-weight:bold;">Totals</span>
<span class="t " style="left:298.92px;top:302.98px;font-size:8.5px;line-height:12.5px;color:#3f82c6;transform:scaleX(0.9600);">55</span>
<span class="t " style="left:294.39px;top:315.73px;font-size:8.5px;line-height:12.5px;color:#3f82c6;transform:scaleX(0.9600);">125</span>
<span class="t " style="left:286.14px;top:328.48px;font-size:8.5px;line-height:12.5px;color:#1e63ac;transform:scaleX(0.9900);font-weight:bold;">6,875</span>
<span class="t " style="left:354.22px;top:302.98px;font-size:8.5px;line-height:12.5px;color:#3f82c6;transform:scaleX(0.9600);">55</span>
<span class="t " style="left:349.69px;top:315.73px;font-size:8.5px;line-height:12.5px;color:#3f82c6;transform:scaleX(0.9600);">125</span>
<span class="t " style="left:341.44px;top:328.48px;font-size:8.5px;line-height:12.5px;color:#1e63ac;transform:scaleX(0.9900);font-weight:bold;">6,875</span>
<span class="t " style="left:409.52px;top:302.98px;font-size:8.5px;line-height:12.5px;color:#3f82c6;transform:scaleX(0.9600);">55</span>
<span class="t " style="left:404.99px;top:315.73px;font-size:8.5px;line-height:12.5px;color:#3f82c6;transform:scaleX(0.9600);">125</span>
<span class="t " style="left:396.74px;top:328.48px;font-size:8.5px;line-height:12.5px;color:#1e63ac;transform:scaleX(0.9900);font-weight:bold;">6,875</span>
<span class="t " style="left:464.82px;top:302.98px;font-size:8.5px;line-height:12.5px;color:#3f82c6;transform:scaleX(0.9600);">55</span>
<span class="t " style="left:460.29px;top:315.73px;font-size:8.5px;line-height:12.5px;color:#3f82c6;transform:scaleX(0.9600);">125</span>
<span class="t " style="left:452.04px;top:328.48px;font-size:8.5px;line-height:12.5px;color:#1e63ac;transform:scaleX(0.9900);font-weight:bold;">6,875</span>
<span class="t " style="left:520.12px;top:302.98px;font-size:8.5px;line-height:12.5px;color:#3f82c6;transform:scaleX(0.9600);">55</span>
<span class="t " style="left:515.59px;top:315.73px;font-size:8.5px;line-height:12.5px;color:#3f82c6;transform:scaleX(0.9600);">125</span>
<span class="t " style="left:507.34px;top:328.48px;font-size:8.5px;line-height:12.5px;color:#1e63ac;transform:scaleX(0.9900);font-weight:bold;">6,875</span>
<span class="t " style="left:575.42px;top:302.98px;font-size:8.5px;line-height:12.5px;color:#3f82c6;transform:scaleX(0.9600);">55</span>
<span class="t " style="left:570.89px;top:315.73px;font-size:8.5px;line-height:12.5px;color:#3f82c6;transform:scaleX(0.9600);">125</span>
<span class="t " style="left:562.64px;top:328.48px;font-size:8.5px;line-height:12.5px;color:#1e63ac;transform:scaleX(0.9900);font-weight:bold;">6,875</span>
<span class="t " style="left:630.72px;top:302.98px;font-size:8.5px;line-height:12.5px;color:#3f82c6;transform:scaleX(0.9600);">55</span>
<span class="t " style="left:626.19px;top:315.73px;font-size:8.5px;line-height:12.5px;color:#3f82c6;transform:scaleX(0.9600);">125</span>
<span class="t " style="left:617.94px;top:328.48px;font-size:8.5px;line-height:12.5px;color:#1e63ac;transform:scaleX(0.9900);font-weight:bold;">6,875</span>
<span class="t " style="left:686.02px;top:302.98px;font-size:8.5px;line-height:12.5px;color:#3f82c6;transform:scaleX(0.9600);">55</span>
<span class="t " style="left:681.49px;top:315.73px;font-size:8.5px;line-height:12.5px;color:#3f82c6;transform:scaleX(0.9600);">125</span>
<span class="t " style="left:673.24px;top:328.48px;font-size:8.5px;line-height:12.5px;color:#1e63ac;transform:scaleX(0.9900);font-weight:bold;">6,875</span>
<span class="t " style="left:741.32px;top:302.98px;font-size:8.5px;line-height:12.5px;color:#3f82c6;transform:scaleX(0.9600);">55</span>
<span class="t " style="left:736.79px;top:315.73px;font-size:8.5px;line-height:12.5px;color:#3f82c6;transform:scaleX(0.9600);">125</span>
<span class="t " style="left:728.54px;top:328.48px;font-size:8.5px;line-height:12.5px;color:#1e63ac;transform:scaleX(0.9900);font-weight:bold;">6,875</span>
<span class="t " style="left:796.62px;top:302.98px;font-size:8.5px;line-height:12.5px;color:#3f82c6;transform:scaleX(0.9600);">55</span>
<span class="t " style="left:792.09px;top:315.73px;font-size:8.5px;line-height:12.5px;color:#3f82c6;transform:scaleX(0.9600);">125</span>
<span class="t " style="left:783.84px;top:328.48px;font-size:8.5px;line-height:12.5px;color:#1e63ac;transform:scaleX(0.9900);font-weight:bold;">6,875</span>
<span class="t " style="left:851.92px;top:302.98px;font-size:8.5px;line-height:12.5px;color:#3f82c6;transform:scaleX(0.9600);">55</span>
<span class="t " style="left:847.39px;top:315.73px;font-size:8.5px;line-height:12.5px;color:#3f82c6;transform:scaleX(0.9600);">125</span>
<span class="t " style="left:839.14px;top:328.48px;font-size:8.5px;line-height:12.5px;color:#1e63ac;transform:scaleX(0.9900);font-weight:bold;">6,875</span>
<span class="t " style="left:907.22px;top:302.98px;font-size:8.5px;line-height:12.5px;color:#3f82c6;transform:scaleX(0.9600);">55</span>
<span class="t " style="left:902.69px;top:315.73px;font-size:8.5px;line-height:12.5px;color:#3f82c6;transform:scaleX(0.9600);">125</span>
<span class="t " style="left:894.44px;top:328.48px;font-size:8.5px;line-height:12.5px;color:#1e63ac;transform:scaleX(0.9900);font-weight:bold;">6,875</span>
<span class="t " style="left:957.99px;top:302.98px;font-size:8.5px;line-height:12.5px;color:#3f82c6;transform:scaleX(0.9600);">660</span>
<span class="t " style="left:951.18px;top:315.73px;font-size:8.5px;line-height:12.5px;color:#3f82c6;transform:scaleX(0.9600);">1,500</span>
<span class="t " style="left:945.06px;top:328.48px;font-size:8.5px;line-height:12.5px;color:#1e63ac;transform:scaleX(0.9900);font-weight:bold;">82,500</span>
<div class="r" style="left:257.00px;top:339.25px;width:718.90px;height:1.25px;background:#585858;"></div>
<span class="t " style="left:32.00px;top:341.23px;font-size:8.5px;line-height:12.5px;color:#1e63ac;transform:scaleX(0.9300);font-weight:bold;">Fireboard</span>
<span class="t " style="left:38.60px;top:353.98px;font-size:8.5px;line-height:12.5px;color:#6088b3;transform:scaleX(0.9600);">Product Fee</span>
<span class="t " style="left:183.80px;top:353.98px;font-size:8.5px;line-height:12.5px;color:#3f7fc0;transform:scaleX(0.9600);">USD</span>
<span class="t " style="left:38.60px;top:366.73px;font-size:8.5px;line-height:12.5px;color:#6088b3;transform:scaleX(0.9600);">Number Sold</span>
<span class="t " style="left:183.80px;top:366.73px;font-size:8.5px;line-height:12.5px;color:#3f7fc0;transform:scaleX(0.9600);">units</span>
<span class="t " style="left:32.00px;top:379.48px;font-size:8.5px;line-height:12.5px;color:#1e63ac;transform:scaleX(0.9300);font-weight:bold;">Totals</span>
<span class="t " style="left:294.39px;top:353.98px;font-size:8.5px;line-height:12.5px;color:#3f82c6;transform:scaleX(0.9600);">350</span>
<span class="t " style="left:294.39px;top:366.73px;font-size:8.5px;line-height:12.5px;color:#3f82c6;transform:scaleX(0.9600);">235</span>
<span class="t " style="left:281.46px;top:379.48px;font-size:8.5px;line-height:12.5px;color:#1e63ac;transform:scaleX(0.9900);font-weight:bold;">82,250</span>
<span class="t " style="left:349.69px;top:353.98px;font-size:8.5px;line-height:12.5px;color:#3f82c6;transform:scaleX(0.9600);">350</span>
<span class="t " style="left:349.69px;top:366.73px;font-size:8.5px;line-height:12.5px;color:#3f82c6;transform:scaleX(0.9600);">235</span>
<span class="t " style="left:336.76px;top:379.48px;font-size:8.5px;line-height:12.5px;color:#1e63ac;transform:scaleX(0.9900);font-weight:bold;">82,250</span>
<span class="t " style="left:404.99px;top:353.98px;font-size:8.5px;line-height:12.5px;color:#3f82c6;transform:scaleX(0.9600);">350</span>
<span class="t " style="left:404.99px;top:366.73px;font-size:8.5px;line-height:12.5px;color:#3f82c6;transform:scaleX(0.9600);">235</span>
<span class="t " style="left:392.06px;top:379.48px;font-size:8.5px;line-height:12.5px;color:#1e63ac;transform:scaleX(0.9900);font-weight:bold;">82,250</span>
<span class="t " style="left:460.29px;top:353.98px;font-size:8.5px;line-height:12.5px;color:#3f82c6;transform:scaleX(0.9600);">350</span>
<span class="t " style="left:460.29px;top:366.73px;font-size:8.5px;line-height:12.5px;color:#3f82c6;transform:scaleX(0.9600);">235</span>
<span class="t " style="left:447.36px;top:379.48px;font-size:8.5px;line-height:12.5px;color:#1e63ac;transform:scaleX(0.9900);font-weight:bold;">82,250</span>
<span class="t " style="left:515.59px;top:353.98px;font-size:8.5px;line-height:12.5px;color:#3f82c6;transform:scaleX(0.9600);">350</span>
<span class="t " style="left:515.59px;top:366.73px;font-size:8.5px;line-height:12.5px;color:#3f82c6;transform:scaleX(0.9600);">235</span>
<span class="t " style="left:502.66px;top:379.48px;font-size:8.5px;line-height:12.5px;color:#1e63ac;transform:scaleX(0.9900);font-weight:bold;">82,250</span>
<span class="t " style="left:570.89px;top:353.98px;font-size:8.5px;line-height:12.5px;color:#3f82c6;transform:scaleX(0.9600);">350</span>
<span class="t " style="left:570.89px;top:366.73px;font-size:8.5px;line-height:12.5px;color:#3f82c6;transform:scaleX(0.9600);">235</span>
<span class="t " style="left:557.96px;top:379.48px;font-size:8.5px;line-height:12.5px;color:#1e63ac;transform:scaleX(0.9900);font-weight:bold;">82,250</span>
<span class="t " style="left:626.19px;top:353.98px;font-size:8.5px;line-height:12.5px;color:#3f82c6;transform:scaleX(0.9600);">350</span>
<span class="t " style="left:626.19px;top:366.73px;font-size:8.5px;line-height:12.5px;color:#3f82c6;transform:scaleX(0.9600);">235</span>
<span class="t " style="left:613.26px;top:379.48px;font-size:8.5px;line-height:12.5px;color:#1e63ac;transform:scaleX(0.9900);font-weight:bold;">82,250</span>
<span class="t " style="left:681.49px;top:353.98px;font-size:8.5px;line-height:12.5px;color:#3f82c6;transform:scaleX(0.9600);">350</span>
<span class="t " style="left:681.49px;top:366.73px;font-size:8.5px;line-height:12.5px;color:#3f82c6;transform:scaleX(0.9600);">235</span>
<span class="t " style="left:668.56px;top:379.48px;font-size:8.5px;line-height:12.5px;color:#1e63ac;transform:scaleX(0.9900);font-weight:bold;">82,250</span>
<span class="t " style="left:736.79px;top:353.98px;font-size:8.5px;line-height:12.5px;color:#3f82c6;transform:scaleX(0.9600);">350</span>
<span class="t " style="left:736.79px;top:366.73px;font-size:8.5px;line-height:12.5px;color:#3f82c6;transform:scaleX(0.9600);">235</span>
<span class="t " style="left:723.86px;top:379.48px;font-size:8.5px;line-height:12.5px;color:#1e63ac;transform:scaleX(0.9900);font-weight:bold;">82,250</span>
<span class="t " style="left:792.09px;top:353.98px;font-size:8.5px;line-height:12.5px;color:#3f82c6;transform:scaleX(0.9600);">350</span>
<span class="t " style="left:792.09px;top:366.73px;font-size:8.5px;line-height:12.5px;color:#3f82c6;transform:scaleX(0.9600);">235</span>
<span class="t " style="left:779.16px;top:379.48px;font-size:8.5px;line-height:12.5px;color:#1e63ac;transform:scaleX(0.9900);font-weight:bold;">82,250</span>
<span class="t " style="left:847.39px;top:353.98px;font-size:8.5px;line-height:12.5px;color:#3f82c6;transform:scaleX(0.9600);">350</span>
<span class="t " style="left:847.39px;top:366.73px;font-size:8.5px;line-height:12.5px;color:#3f82c6;transform:scaleX(0.9600);">235</span>
<span class="t " style="left:834.46px;top:379.48px;font-size:8.5px;line-height:12.5px;color:#1e63ac;transform:scaleX(0.9900);font-weight:bold;">82,250</span>
<span class="t " style="left:902.69px;top:353.98px;font-size:8.5px;line-height:12.5px;color:#3f82c6;transform:scaleX(0.9600);">350</span>
<span class="t " style="left:902.69px;top:366.73px;font-size:8.5px;line-height:12.5px;color:#3f82c6;transform:scaleX(0.9600);">235</span>
<span class="t " style="left:889.76px;top:379.48px;font-size:8.5px;line-height:12.5px;color:#1e63ac;transform:scaleX(0.9900);font-weight:bold;">82,250</span>
<span class="t " style="left:951.18px;top:353.98px;font-size:8.5px;line-height:12.5px;color:#3f82c6;transform:scaleX(0.9600);">4,200</span>
<span class="t " style="left:951.18px;top:366.73px;font-size:8.5px;line-height:12.5px;color:#3f82c6;transform:scaleX(0.9600);">2,820</span>
<span class="t " style="left:940.39px;top:379.48px;font-size:8.5px;line-height:12.5px;color:#1e63ac;transform:scaleX(0.9900);font-weight:bold;">987,000</span>
<div class="r" style="left:257.00px;top:390.25px;width:718.90px;height:1.25px;background:#585858;"></div>
<span class="t " style="left:32.00px;top:392.23px;font-size:8.5px;line-height:12.5px;color:#1e63ac;transform:scaleX(0.9300);font-weight:bold;">Timberframe</span>
<span class="t " style="left:38.60px;top:404.98px;font-size:8.5px;line-height:12.5px;color:#6088b3;transform:scaleX(0.9600);">Product Fee</span>
<span class="t " style="left:183.80px;top:404.98px;font-size:8.5px;line-height:12.5px;color:#3f7fc0;transform:scaleX(0.9600);">USD</span>
<span class="t " style="left:38.60px;top:417.73px;font-size:8.5px;line-height:12.5px;color:#6088b3;transform:scaleX(0.9600);">Number Sold</span>
<span class="t " style="left:183.80px;top:417.73px;font-size:8.5px;line-height:12.5px;color:#3f7fc0;transform:scaleX(0.9600);">units</span>
<span class="t " style="left:32.00px;top:430.48px;font-size:8.5px;line-height:12.5px;color:#1e63ac;transform:scaleX(0.9300);font-weight:bold;">Totals</span>
<span class="t " style="left:298.92px;top:404.98px;font-size:8.5px;line-height:12.5px;color:#3f82c6;transform:scaleX(0.9600);">65</span>
<span class="t " style="left:294.39px;top:417.73px;font-size:8.5px;line-height:12.5px;color:#3f82c6;transform:scaleX(0.9600);">175</span>
<span class="t " style="left:281.93px;top:430.48px;font-size:8.5px;line-height:12.5px;color:#1e63ac;transform:scaleX(0.9900);font-weight:bold;">11,375</span>
<span class="t " style="left:354.22px;top:404.98px;font-size:8.5px;line-height:12.5px;color:#3f82c6;transform:scaleX(0.9600);">65</span>
<span class="t " style="left:349.69px;top:417.73px;font-size:8.5px;line-height:12.5px;color:#3f82c6;transform:scaleX(0.9600);">175</span>
<span class="t " style="left:337.23px;top:430.48px;font-size:8.5px;line-height:12.5px;color:#1e63ac;transform:scaleX(0.9900);font-weight:bold;">11,375</span>
<span class="t " style="left:409.52px;top:404.98px;font-size:8.5px;line-height:12.5px;color:#3f82c6;transform:scaleX(0.9600);">65</span>
<span class="t " style="left:404.99px;top:417.73px;font-size:8.5px;line-height:12.5px;color:#3f82c6;transform:scaleX(0.9600);">175</span>
<span class="t " style="left:392.53px;top:430.48px;font-size:8.5px;line-height:12.5px;color:#1e63ac;transform:scaleX(0.9900);font-weight:bold;">11,375</span>
<span class="t " style="left:464.82px;top:404.98px;font-size:8.5px;line-height:12.5px;color:#3f82c6;transform:scaleX(0.9600);">65</span>
<span class="t " style="left:460.29px;top:417.73px;font-size:8.5px;line-height:12.5px;color:#3f82c6;transform:scaleX(0.9600);">175</span>
<span class="t " style="left:447.83px;top:430.48px;font-size:8.5px;line-height:12.5px;color:#1e63ac;transform:scaleX(0.9900);font-weight:bold;">11,375</span>
<span class="t " style="left:520.12px;top:404.98px;font-size:8.5px;line-height:12.5px;color:#3f82c6;transform:scaleX(0.9600);">65</span>
<span class="t " style="left:515.59px;top:417.73px;font-size:8.5px;line-height:12.5px;color:#3f82c6;transform:scaleX(0.9600);">175</span>
<span class="t " style="left:503.13px;top:430.48px;font-size:8.5px;line-height:12.5px;color:#1e63ac;transform:scaleX(0.9900);font-weight:bold;">11,375</span>
<span class="t " style="left:575.42px;top:404.98px;font-size:8.5px;line-height:12.5px;color:#3f82c6;transform:scaleX(0.9600);">65</span>
<span class="t " style="left:570.89px;top:417.73px;font-size:8.5px;line-height:12.5px;color:#3f82c6;transform:scaleX(0.9600);">175</span>
<span class="t " style="left:558.43px;top:430.48px;font-size:8.5px;line-height:12.5px;color:#1e63ac;transform:scaleX(0.9900);font-weight:bold;">11,375</span>
<span class="t " style="left:630.72px;top:404.98px;font-size:8.5px;line-height:12.5px;color:#3f82c6;transform:scaleX(0.9600);">65</span>
<span class="t " style="left:626.19px;top:417.73px;font-size:8.5px;line-height:12.5px;color:#3f82c6;transform:scaleX(0.9600);">175</span>
<span class="t " style="left:613.73px;top:430.48px;font-size:8.5px;line-height:12.5px;color:#1e63ac;transform:scaleX(0.9900);font-weight:bold;">11,375</span>
<span class="t " style="left:686.02px;top:404.98px;font-size:8.5px;line-height:12.5px;color:#3f82c6;transform:scaleX(0.9600);">65</span>
<span class="t " style="left:681.49px;top:417.73px;font-size:8.5px;line-height:12.5px;color:#3f82c6;transform:scaleX(0.9600);">175</span>
<span class="t " style="left:669.03px;top:430.48px;font-size:8.5px;line-height:12.5px;color:#1e63ac;transform:scaleX(0.9900);font-weight:bold;">11,375</span>
<span class="t " style="left:741.32px;top:404.98px;font-size:8.5px;line-height:12.5px;color:#3f82c6;transform:scaleX(0.9600);">65</span>
<span class="t " style="left:736.79px;top:417.73px;font-size:8.5px;line-height:12.5px;color:#3f82c6;transform:scaleX(0.9600);">175</span>
<span class="t " style="left:724.33px;top:430.48px;font-size:8.5px;line-height:12.5px;color:#1e63ac;transform:scaleX(0.9900);font-weight:bold;">11,375</span>
<span class="t " style="left:796.62px;top:404.98px;font-size:8.5px;line-height:12.5px;color:#3f82c6;transform:scaleX(0.9600);">65</span>
<span class="t " style="left:792.09px;top:417.73px;font-size:8.5px;line-height:12.5px;color:#3f82c6;transform:scaleX(0.9600);">175</span>
<span class="t " style="left:779.63px;top:430.48px;font-size:8.5px;line-height:12.5px;color:#1e63ac;transform:scaleX(0.9900);font-weight:bold;">11,375</span>
<span class="t " style="left:851.92px;top:404.98px;font-size:8.5px;line-height:12.5px;color:#3f82c6;transform:scaleX(0.9600);">65</span>
<span class="t " style="left:847.39px;top:417.73px;font-size:8.5px;line-height:12.5px;color:#3f82c6;transform:scaleX(0.9600);">175</span>
<span class="t " style="left:834.93px;top:430.48px;font-size:8.5px;line-height:12.5px;color:#1e63ac;transform:scaleX(0.9900);font-weight:bold;">11,375</span>
<span class="t " style="left:907.22px;top:404.98px;font-size:8.5px;line-height:12.5px;color:#3f82c6;transform:scaleX(0.9600);">65</span>
<span class="t " style="left:902.69px;top:417.73px;font-size:8.5px;line-height:12.5px;color:#3f82c6;transform:scaleX(0.9600);">175</span>
<span class="t " style="left:890.23px;top:430.48px;font-size:8.5px;line-height:12.5px;color:#1e63ac;transform:scaleX(0.9900);font-weight:bold;">11,375</span>
<span class="t " style="left:957.99px;top:404.98px;font-size:8.5px;line-height:12.5px;color:#3f82c6;transform:scaleX(0.9600);">780</span>
<span class="t " style="left:951.18px;top:417.73px;font-size:8.5px;line-height:12.5px;color:#3f82c6;transform:scaleX(0.9600);">2,100</span>
<span class="t " style="left:940.39px;top:430.48px;font-size:8.5px;line-height:12.5px;color:#1e63ac;transform:scaleX(0.9900);font-weight:bold;">136,500</span>
<div class="r" style="left:257.00px;top:441.25px;width:718.90px;height:1.25px;background:#585858;"></div>
<span class="t " style="left:32.00px;top:443.23px;font-size:8.5px;line-height:12.5px;color:#1e63ac;transform:scaleX(0.9300);font-weight:bold;">Pallet Boxes</span>
<span class="t " style="left:38.60px;top:455.98px;font-size:8.5px;line-height:12.5px;color:#6088b3;transform:scaleX(0.9600);">Product Fee</span>
<span class="t " style="left:183.80px;top:455.98px;font-size:8.5px;line-height:12.5px;color:#3f7fc0;transform:scaleX(0.9600);">USD</span>
<span class="t " style="left:38.60px;top:468.73px;font-size:8.5px;line-height:12.5px;color:#6088b3;transform:scaleX(0.9600);">Number Sold</span>
<span class="t " style="left:183.80px;top:468.73px;font-size:8.5px;line-height:12.5px;color:#3f7fc0;transform:scaleX(0.9600);">units</span>
<span class="t " style="left:32.00px;top:481.48px;font-size:8.5px;line-height:12.5px;color:#1e63ac;transform:scaleX(0.9300);font-weight:bold;">Totals</span>
<span class="t " style="left:294.39px;top:455.98px;font-size:8.5px;line-height:12.5px;color:#3f82c6;transform:scaleX(0.9600);">450</span>
<span class="t " style="left:294.99px;top:468.73px;font-size:8.5px;line-height:12.5px;color:#3f82c6;transform:scaleX(0.9600);">113</span>
<span class="t " style="left:281.46px;top:481.48px;font-size:8.5px;line-height:12.5px;color:#1e63ac;transform:scaleX(0.9900);font-weight:bold;">50,850</span>
<span class="t " style="left:349.69px;top:455.98px;font-size:8.5px;line-height:12.5px;color:#3f82c6;transform:scaleX(0.9600);">450</span>
<span class="t " style="left:350.29px;top:468.73px;font-size:8.5px;line-height:12.5px;color:#3f82c6;transform:scaleX(0.9600);">113</span>
<span class="t " style="left:336.76px;top:481.48px;font-size:8.5px;line-height:12.5px;color:#1e63ac;transform:scaleX(0.9900);font-weight:bold;">50,850</span>
<span class="t " style="left:404.99px;top:455.98px;font-size:8.5px;line-height:12.5px;color:#3f82c6;transform:scaleX(0.9600);">450</span>
<span class="t " style="left:405.59px;top:468.73px;font-size:8.5px;line-height:12.5px;color:#3f82c6;transform:scaleX(0.9600);">113</span>
<span class="t " style="left:392.06px;top:481.48px;font-size:8.5px;line-height:12.5px;color:#1e63ac;transform:scaleX(0.9900);font-weight:bold;">50,850</span>
<span class="t " style="left:460.29px;top:455.98px;font-size:8.5px;line-height:12.5px;color:#3f82c6;transform:scaleX(0.9600);">450</span>
<span class="t " style="left:460.89px;top:468.73px;font-size:8.5px;line-height:12.5px;color:#3f82c6;transform:scaleX(0.9600);">113</span>
<span class="t " style="left:447.36px;top:481.48px;font-size:8.5px;line-height:12.5px;color:#1e63ac;transform:scaleX(0.9900);font-weight:bold;">50,850</span>
<span class="t " style="left:515.59px;top:455.98px;font-size:8.5px;line-height:12.5px;color:#3f82c6;transform:scaleX(0.9600);">450</span>
<span class="t " style="left:516.19px;top:468.73px;font-size:8.5px;line-height:12.5px;color:#3f82c6;transform:scaleX(0.9600);">113</span>
<span class="t " style="left:502.66px;top:481.48px;font-size:8.5px;line-height:12.5px;color:#1e63ac;transform:scaleX(0.9900);font-weight:bold;">50,850</span>
<span class="t " style="left:570.89px;top:455.98px;font-size:8.5px;line-height:12.5px;color:#3f82c6;transform:scaleX(0.9600);">450</span>
<span class="t " style="left:571.49px;top:468.73px;font-size:8.5px;line-height:12.5px;color:#3f82c6;transform:scaleX(0.9600);">113</span>
<span class="t " style="left:557.96px;top:481.48px;font-size:8.5px;line-height:12.5px;color:#1e63ac;transform:scaleX(0.9900);font-weight:bold;">50,850</span>
<span class="t " style="left:626.19px;top:455.98px;font-size:8.5px;line-height:12.5px;color:#3f82c6;transform:scaleX(0.9600);">450</span>
<span class="t " style="left:626.79px;top:468.73px;font-size:8.5px;line-height:12.5px;color:#3f82c6;transform:scaleX(0.9600);">113</span>
<span class="t " style="left:613.26px;top:481.48px;font-size:8.5px;line-height:12.5px;color:#1e63ac;transform:scaleX(0.9900);font-weight:bold;">50,850</span>
<span class="t " style="left:681.49px;top:455.98px;font-size:8.5px;line-height:12.5px;color:#3f82c6;transform:scaleX(0.9600);">450</span>
<span class="t " style="left:682.09px;top:468.73px;font-size:8.5px;line-height:12.5px;color:#3f82c6;transform:scaleX(0.9600);">113</span>
<span class="t " style="left:668.56px;top:481.48px;font-size:8.5px;line-height:12.5px;color:#1e63ac;transform:scaleX(0.9900);font-weight:bold;">50,850</span>
<span class="t " style="left:736.79px;top:455.98px;font-size:8.5px;line-height:12.5px;color:#3f82c6;transform:scaleX(0.9600);">450</span>
<span class="t " style="left:737.39px;top:468.73px;font-size:8.5px;line-height:12.5px;color:#3f82c6;transform:scaleX(0.9600);">113</span>
<span class="t " style="left:723.86px;top:481.48px;font-size:8.5px;line-height:12.5px;color:#1e63ac;transform:scaleX(0.9900);font-weight:bold;">50,850</span>
<span class="t " style="left:792.09px;top:455.98px;font-size:8.5px;line-height:12.5px;color:#3f82c6;transform:scaleX(0.9600);">450</span>
<span class="t " style="left:792.69px;top:468.73px;font-size:8.5px;line-height:12.5px;color:#3f82c6;transform:scaleX(0.9600);">113</span>
<span class="t " style="left:779.16px;top:481.48px;font-size:8.5px;line-height:12.5px;color:#1e63ac;transform:scaleX(0.9900);font-weight:bold;">50,850</span>
<span class="t " style="left:847.39px;top:455.98px;font-size:8.5px;line-height:12.5px;color:#3f82c6;transform:scaleX(0.9600);">450</span>
<span class="t " style="left:847.99px;top:468.73px;font-size:8.5px;line-height:12.5px;color:#3f82c6;transform:scaleX(0.9600);">113</span>
<span class="t " style="left:834.46px;top:481.48px;font-size:8.5px;line-height:12.5px;color:#1e63ac;transform:scaleX(0.9900);font-weight:bold;">50,850</span>
<span class="t " style="left:902.69px;top:455.98px;font-size:8.5px;line-height:12.5px;color:#3f82c6;transform:scaleX(0.9600);">450</span>
<span class="t " style="left:903.29px;top:468.73px;font-size:8.5px;line-height:12.5px;color:#3f82c6;transform:scaleX(0.9600);">113</span>
<span class="t " style="left:889.76px;top:481.48px;font-size:8.5px;line-height:12.5px;color:#1e63ac;transform:scaleX(0.9900);font-weight:bold;">50,850</span>
<span class="t " style="left:951.18px;top:455.98px;font-size:8.5px;line-height:12.5px;color:#3f82c6;transform:scaleX(0.9600);">5,400</span>
<span class="t " style="left:951.18px;top:468.73px;font-size:8.5px;line-height:12.5px;color:#3f82c6;transform:scaleX(0.9600);">1,356</span>
<span class="t " style="left:940.39px;top:481.48px;font-size:8.5px;line-height:12.5px;color:#1e63ac;transform:scaleX(0.9900);font-weight:bold;">610,200</span>
<div class="r" style="left:257.00px;top:492.25px;width:718.90px;height:1.25px;background:#585858;"></div>
<span class="t " style="left:32.00px;top:494.23px;font-size:8.5px;line-height:12.5px;color:#1e63ac;transform:scaleX(0.9300);font-weight:bold;">Shipping Crates</span>
<span class="t " style="left:38.60px;top:506.98px;font-size:8.5px;line-height:12.5px;color:#6088b3;transform:scaleX(0.9600);">Product Fee</span>
<span class="t " style="left:183.80px;top:506.98px;font-size:8.5px;line-height:12.5px;color:#3f7fc0;transform:scaleX(0.9600);">USD</span>
<span class="t " style="left:38.60px;top:519.73px;font-size:8.5px;line-height:12.5px;color:#6088b3;transform:scaleX(0.9600);">Number Sold</span>
<span class="t " style="left:183.80px;top:519.73px;font-size:8.5px;line-height:12.5px;color:#3f7fc0;transform:scaleX(0.9600);">units</span>
<span class="t " style="left:32.00px;top:532.48px;font-size:8.5px;line-height:12.5px;color:#1e63ac;transform:scaleX(0.9300);font-weight:bold;">Totals</span>
<span class="t " style="left:294.39px;top:506.98px;font-size:8.5px;line-height:12.5px;color:#3f82c6;transform:scaleX(0.9600);">125</span>
<span class="t " style="left:294.39px;top:519.73px;font-size:8.5px;line-height:12.5px;color:#3f82c6;transform:scaleX(0.9600);">155</span>
<span class="t " style="left:281.46px;top:532.48px;font-size:8.5px;line-height:12.5px;color:#1e63ac;transform:scaleX(0.9900);font-weight:bold;">19,375</span>
<span class="t " style="left:349.69px;top:506.98px;font-size:8.5px;line-height:12.5px;color:#3f82c6;transform:scaleX(0.9600);">125</span>
<span class="t " style="left:349.69px;top:519.73px;font-size:8.5px;line-height:12.5px;color:#3f82c6;transform:scaleX(0.9600);">155</span>
<span class="t " style="left:336.76px;top:532.48px;font-size:8.5px;line-height:12.5px;color:#1e63ac;transform:scaleX(0.9900);font-weight:bold;">19,375</span>
<span class="t " style="left:404.99px;top:506.98px;font-size:8.5px;line-height:12.5px;color:#3f82c6;transform:scaleX(0.9600);">125</span>
<span class="t " style="left:404.99px;top:519.73px;font-size:8.5px;line-height:12.5px;color:#3f82c6;transform:scaleX(0.9600);">155</span>
<span class="t " style="left:392.06px;top:532.48px;font-size:8.5px;line-height:12.5px;color:#1e63ac;transform:scaleX(0.9900);font-weight:bold;">19,375</span>
<span class="t " style="left:460.29px;top:506.98px;font-size:8.5px;line-height:12.5px;color:#3f82c6;transform:scaleX(0.9600);">125</span>
<span class="t " style="left:460.29px;top:519.73px;font-size:8.5px;line-height:12.5px;color:#3f82c6;transform:scaleX(0.9600);">155</span>
<span class="t " style="left:447.36px;top:532.48px;font-size:8.5px;line-height:12.5px;color:#1e63ac;transform:scaleX(0.9900);font-weight:bold;">19,375</span>
<span class="t " style="left:515.59px;top:506.98px;font-size:8.5px;line-height:12.5px;color:#3f82c6;transform:scaleX(0.9600);">125</span>
<span class="t " style="left:515.59px;top:519.73px;font-size:8.5px;line-height:12.5px;color:#3f82c6;transform:scaleX(0.9600);">155</span>
<span class="t " style="left:502.66px;top:532.48px;font-size:8.5px;line-height:12.5px;color:#1e63ac;transform:scaleX(0.9900);font-weight:bold;">19,375</span>
<span class="t " style="left:570.89px;top:506.98px;font-size:8.5px;line-height:12.5px;color:#3f82c6;transform:scaleX(0.9600);">125</span>
<span class="t " style="left:570.89px;top:519.73px;font-size:8.5px;line-height:12.5px;color:#3f82c6;transform:scaleX(0.9600);">155</span>
<span class="t " style="left:557.96px;top:532.48px;font-size:8.5px;line-height:12.5px;color:#1e63ac;transform:scaleX(0.9900);font-weight:bold;">19,375</span>
<span class="t " style="left:626.19px;top:506.98px;font-size:8.5px;line-height:12.5px;color:#3f82c6;transform:scaleX(0.9600);">125</span>
<span class="t " style="left:626.19px;top:519.73px;font-size:8.5px;line-height:12.5px;color:#3f82c6;transform:scaleX(0.9600);">155</span>
<span class="t " style="left:613.26px;top:532.48px;font-size:8.5px;line-height:12.5px;color:#1e63ac;transform:scaleX(0.9900);font-weight:bold;">19,375</span>
<span class="t " style="left:681.49px;top:506.98px;font-size:8.5px;line-height:12.5px;color:#3f82c6;transform:scaleX(0.9600);">125</span>
<span class="t " style="left:681.49px;top:519.73px;font-size:8.5px;line-height:12.5px;color:#3f82c6;transform:scaleX(0.9600);">155</span>
<span class="t " style="left:668.56px;top:532.48px;font-size:8.5px;line-height:12.5px;color:#1e63ac;transform:scaleX(0.9900);font-weight:bold;">19,375</span>
<span class="t " style="left:736.79px;top:506.98px;font-size:8.5px;line-height:12.5px;color:#3f82c6;transform:scaleX(0.9600);">125</span>
<span class="t " style="left:736.79px;top:519.73px;font-size:8.5px;line-height:12.5px;color:#3f82c6;transform:scaleX(0.9600);">155</span>
<span class="t " style="left:723.86px;top:532.48px;font-size:8.5px;line-height:12.5px;color:#1e63ac;transform:scaleX(0.9900);font-weight:bold;">19,375</span>
<span class="t " style="left:792.09px;top:506.98px;font-size:8.5px;line-height:12.5px;color:#3f82c6;transform:scaleX(0.9600);">125</span>
<span class="t " style="left:792.09px;top:519.73px;font-size:8.5px;line-height:12.5px;color:#3f82c6;transform:scaleX(0.9600);">155</span>
<span class="t " style="left:779.16px;top:532.48px;font-size:8.5px;line-height:12.5px;color:#1e63ac;transform:scaleX(0.9900);font-weight:bold;">19,375</span>
<span class="t " style="left:847.39px;top:506.98px;font-size:8.5px;line-height:12.5px;color:#3f82c6;transform:scaleX(0.9600);">125</span>
<span class="t " style="left:847.39px;top:519.73px;font-size:8.5px;line-height:12.5px;color:#3f82c6;transform:scaleX(0.9600);">155</span>
<span class="t " style="left:834.46px;top:532.48px;font-size:8.5px;line-height:12.5px;color:#1e63ac;transform:scaleX(0.9900);font-weight:bold;">19,375</span>
<span class="t " style="left:902.69px;top:506.98px;font-size:8.5px;line-height:12.5px;color:#3f82c6;transform:scaleX(0.9600);">125</span>
<span class="t " style="left:902.69px;top:519.73px;font-size:8.5px;line-height:12.5px;color:#3f82c6;transform:scaleX(0.9600);">155</span>
<span class="t " style="left:889.76px;top:532.48px;font-size:8.5px;line-height:12.5px;color:#1e63ac;transform:scaleX(0.9900);font-weight:bold;">19,375</span>
<span class="t " style="left:951.18px;top:506.98px;font-size:8.5px;line-height:12.5px;color:#3f82c6;transform:scaleX(0.9600);">1,500</span>
<span class="t " style="left:951.18px;top:519.73px;font-size:8.5px;line-height:12.5px;color:#3f82c6;transform:scaleX(0.9600);">1,860</span>
<span class="t " style="left:940.39px;top:532.48px;font-size:8.5px;line-height:12.5px;color:#1e63ac;transform:scaleX(0.9900);font-weight:bold;">232,500</span>
<div class="r" style="left:257.00px;top:543.25px;width:718.90px;height:1.25px;background:#585858;"></div>
<span class="t " style="left:32.00px;top:545.23px;font-size:8.5px;line-height:12.5px;color:#1e63ac;transform:scaleX(0.9300);font-weight:bold;">Corex Boxes</span>
<div class="r" style="left:987.00px;top:48.70px;width:13.00px;height:510.50px;background:#f3f3f3;"></div>
<div class="r" style="left:987.00px;top:63.90px;width:0.80px;height:495.30px;background:#e6e6e6;"></div>
<div class="r" style="left:991.00px;top:63.00px;width:6.00px;height:392.60px;background:#6b6b6b;border-radius:3px;"></div>
<svg style="left:990.8px;top:55px" width="6" height="5" viewBox="0 0 8 6"><path d="M0.8 5L3.9 1 7 5z" fill="#6a6a6a"/></svg>
<svg style="left:990.8px;top:553px" width="6" height="5" viewBox="0 0 8 6"><path d="M0.8 1L3.9 5 7 1z" fill="#555"/></svg>
<div class="r" style="left:0.00px;top:559.20px;width:1000.00px;height:20.80px;background:#e3e5eb;"></div>
<div class="r" style="left:0.00px;top:580.00px;width:1000.00px;height:13.00px;background:#f2f2f2;"></div>
<svg style="left:15px;top:565px" width="6" height="9" viewBox="0 0 6 9"><path d="M4.6 0.8L1.2 4.5l3.4 3.7" fill="none" stroke="#b5b5b5" stroke-width="1.1"/></svg>
<svg style="left:36.5px;top:565px" width="6" height="9" viewBox="0 0 6 9"><path d="M1.2 0.8L4.6 4.5 1.2 8.2" fill="none" stroke="#8a8a8a" stroke-width="1.1"/></svg>
<div class="r" style="left:120.40px;top:559.20px;width:62.60px;height:20.80px;background:#ffffff;border-radius:0 0 3px 3px;"></div>
<div class="r" style="left:127.00px;top:574.20px;width:48.60px;height:1.40px;background:#2c8a58;"></div>
<div class="r" style="left:186.00px;top:561.30px;width:43.00px;height:16.30px;background:#ffff99;border-radius:2px;"></div>
<div class="r" style="left:457.00px;top:561.30px;width:62.50px;height:16.30px;background:#ffff99;border-radius:2px;"></div>
<div class="r" style="left:525.00px;top:561.30px;width:59.50px;height:16.30px;background:#ffff99;border-radius:2px;"></div>
<div class="r" style="left:590.00px;top:561.30px;width:41.50px;height:16.30px;background:#ffff99;border-radius:2px;"></div>
<div class="r" style="left:861.50px;top:561.30px;width:19.00px;height:16.30px;background:#ffff99;border-radius:2px;"></div>
<div class="r" style="left:279.60px;top:564.00px;width:0.80px;height:13.00px;background:#d6d8de;"></div>
<div class="r" style="left:328.60px;top:564.00px;width:0.80px;height:13.00px;background:#d6d8de;"></div>
<span class="t " style="left:79.00px;top:562.50px;font-size:9.6px;line-height:13.6px;color:#3c3c3c;transform:scaleX(0.9580);">How To</span>
<span class="t " style="left:127.00px;top:560.90px;font-size:9.6px;line-height:13.6px;color:#1f1f1f;transform:scaleX(0.9145);font-weight:bold;">Inputs 2025</span>
<span class="t " style="left:192.50px;top:562.50px;font-size:9.6px;line-height:13.6px;color:#3c3c3c;transform:scaleX(0.8703);">IS 2025</span>
<span class="t " style="left:237.50px;top:562.50px;font-size:9.6px;line-height:13.6px;color:#3c3c3c;transform:scaleX(0.8827);">CF 2025</span>
<span class="t " style="left:287.50px;top:562.50px;font-size:9.6px;line-height:13.6px;color:#3c3c3c;transform:scaleX(0.8689);">BS 2025</span>
<span class="t " style="left:338.00px;top:562.50px;font-size:9.6px;line-height:13.6px;color:#3c3c3c;transform:scaleX(0.9259);">Statements Summary 2025</span>
<span class="t " style="left:464.50px;top:562.50px;font-size:9.6px;line-height:13.6px;color:#3c3c3c;transform:scaleX(0.8574);">CAPEX 2025</span>
<span class="t " style="left:531.00px;top:562.50px;font-size:9.6px;line-height:13.6px;color:#3c3c3c;transform:scaleX(0.9368);">Inputs 2026</span>
<span class="t " style="left:596.00px;top:562.50px;font-size:9.6px;line-height:13.6px;color:#3c3c3c;transform:scaleX(0.8612);">IS 2026</span>
<span class="t " style="left:641.00px;top:562.50px;font-size:9.6px;line-height:13.6px;color:#3c3c3c;transform:scaleX(0.8692);">CF 2026</span>
<span class="t " style="left:691.00px;top:562.50px;font-size:9.6px;line-height:13.6px;color:#3c3c3c;transform:scaleX(0.8553);">BS 2026</span>
<span class="t " style="left:741.00px;top:562.50px;font-size:9.6px;line-height:13.6px;color:#3c3c3c;transform:scaleX(0.9268);">Statements Summary 2026</span>
<span class="t " style="left:867.50px;top:562.50px;font-size:9.6px;line-height:13.6px;color:#3c3c3c;transform:scaleX(0.8998);">CA</span>
<div class="r" style="left:888.00px;top:568.60px;width:1.60px;height:1.60px;background:#444;border-radius:50%;"></div>
<div class="r" style="left:890.60px;top:568.60px;width:1.60px;height:1.60px;background:#444;border-radius:50%;"></div>
<div class="r" style="left:893.20px;top:568.60px;width:1.60px;height:1.60px;background:#444;border-radius:50%;"></div>
<div class="r" style="left:907.00px;top:569.00px;width:8.50px;height:1.00px;background:#444;"></div>
<div class="r" style="left:910.70px;top:565.20px;width:1.00px;height:8.60px;background:#444;"></div>
<div class="r" style="left:931.60px;top:565.40px;width:1.20px;height:1.40px;background:#555;border-radius:50%;"></div>
<div class="r" style="left:931.60px;top:568.40px;width:1.20px;height:1.40px;background:#555;border-radius:50%;"></div>
<div class="r" style="left:931.60px;top:571.40px;width:1.20px;height:1.40px;background:#555;border-radius:50%;"></div>
<svg style="left:945.5px;top:566px" width="5" height="7" viewBox="0 0 5 7"><path d="M4.4 0.6L0.8 3.5l3.6 2.9z" fill="#555"/></svg>
<svg style="left:981.5px;top:566px" width="5" height="7" viewBox="0 0 5 7"><path d="M0.6 0.6L4.2 3.5 0.6 6.4z" fill="#555"/></svg>
<div class="r" style="left:953.80px;top:566.60px;width:21.20px;height:5.80px;background:#6f6f6f;border-radius:3px;"></div>
<span class="t " style="left:7.50px;top:581.60px;font-size:7.6px;line-height:11.6px;color:#4a4a4a;transform:scaleX(0.8330);">Ready</span>
<svg style="left:39px;top:582.5px" width="11" height="10" viewBox="0 0 11 10"><rect x="0.6" y="0.6" width="9.4" height="8.4" rx="1" fill="none" stroke="#444" stroke-width="1"/><path d="M0.6 3.4h9.4M3.6 3.4v5.6" stroke="#444" stroke-width="0.9"/><circle cx="7" cy="6.4" r="1.6" fill="#444"/></svg>
<svg style="left:60.5px;top:582.5px" width="10" height="10" viewBox="0 0 10 10"><circle cx="4.4" cy="1.6" r="1.1" fill="none" stroke="#333" stroke-width="0.9"/><path d="M0.6 3.2l3 0.8v2.2L2 9.4M8.2 3.2l-3 0.8v2.2L6.8 9.4M3.6 4h1.6" fill="none" stroke="#333" stroke-width="0.9"/></svg>
<span class="t " style="left:72.00px;top:581.70px;font-size:7.4px;line-height:11.4px;color:#2b2b2b;transform:scaleX(0.8912);font-weight:bold;">Accessibility: Investigate</span>
<svg style="left:815px;top:582.5px" width="10" height="10" viewBox="0 0 10 10"><rect x="0.6" y="0.6" width="8.6" height="8.4" fill="none" stroke="#444" stroke-width="1"/><path d="M0.6 3.4h8.6M0.6 6.2h8.6M3.5 0.6v8.4M6.4 0.6v8.4" stroke="#444" stroke-width="0.8"/></svg>
<svg style="left:841px;top:582.5px" width="10" height="10" viewBox="0 0 10 10"><rect x="0.6" y="0.6" width="8.6" height="8.4" fill="none" stroke="#555" stroke-width="1"/><path d="M3.2 0.6v8.4M6.6 0.6v8.4" stroke="#555" stroke-width="0.9"/></svg>
<svg style="left:867px;top:582.5px" width="10" height="10" viewBox="0 0 10 10"><rect x="0.6" y="0.6" width="8.6" height="8.4" fill="none" stroke="#555" stroke-width="1"/><path d="M3.2 0.6v4h6" fill="none" stroke="#555" stroke-width="0.9"/></svg>
<div class="r" style="left:889.00px;top:587.00px;width:4.40px;height:0.80px;background:#666;"></div>
<div class="r" style="left:896.00px;top:587.00px;width:65.00px;height:0.70px;background:#9a9a9a;"></div>
<div class="r" style="left:928.40px;top:583.40px;width:2.40px;height:8.00px;background:#4a4a4a;"></div>
<div class="r" style="left:965.40px;top:587.00px;width:4.60px;height:0.80px;background:#666;"></div>
<div class="r" style="left:967.30px;top:585.00px;width:0.80px;height:4.80px;background:#666;"></div>
<span class="t " style="left:978.80px;top:581.70px;font-size:7.4px;line-height:11.4px;color:#4a4a4a;transform:scaleX(0.8560);">100%</span>
</body></html>
